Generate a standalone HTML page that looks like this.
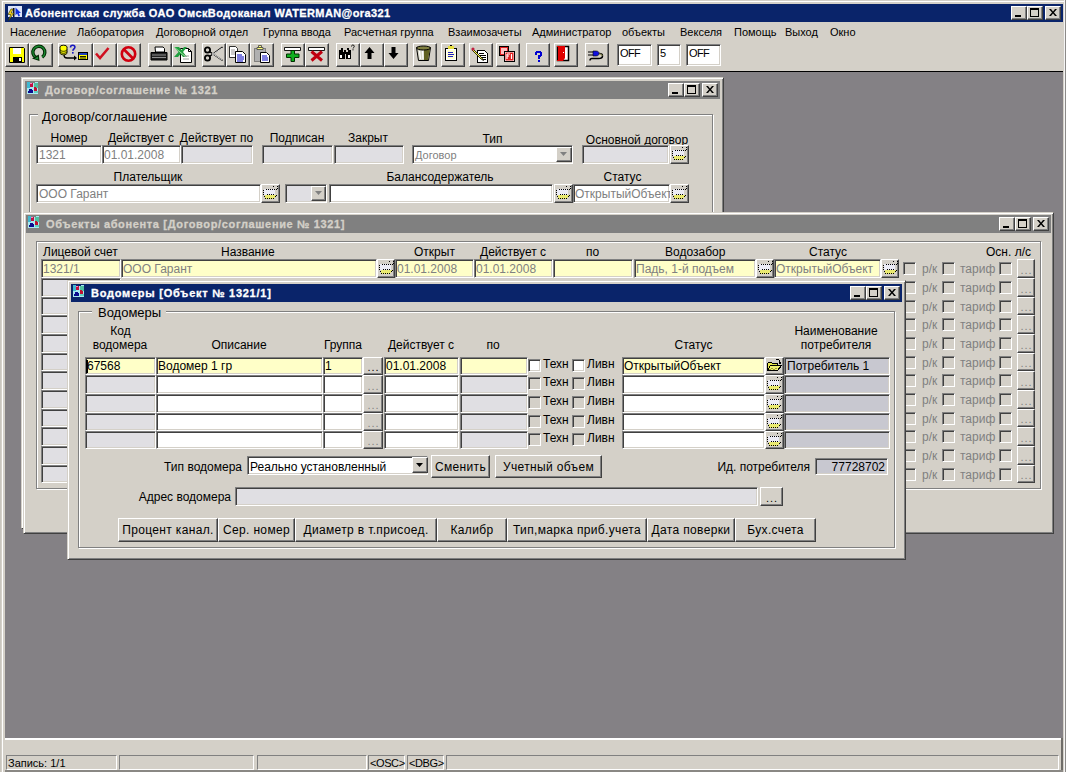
<!DOCTYPE html>
<html><head><meta charset="utf-8"><style>
html,body{margin:0;padding:0;width:1066px;height:772px;overflow:hidden;background:#D4D0C8}
body{position:relative;font-family:"Liberation Sans",sans-serif;}
div{position:absolute;box-sizing:border-box}
.t{white-space:pre}
</style></head><body>
<div style="left:0;top:0;width:1066px;height:772px;background:#D4D0C8"></div>
<div style="left:2px;top:1px;width:1064px;height:1px;background:#fff;"></div>
<div style="left:2px;top:1px;width:1px;height:771px;background:#fff;"></div>
<div style="left:0px;top:0px;width:1px;height:772px;background:#C8C5BE;"></div>
<div style="left:5px;top:4px;width:1058px;height:18px;background:#0A246A;"></div>
<svg style="position:absolute;left:7px;top:5px" width="16" height="16" viewBox="0 0 16 16">
<rect x="1" y="1" width="14" height="11" fill="#dce4f8"/><rect x="6" y="3" width="1.5" height="9" fill="#101020"/>
<path d="M8.5 2.5l5.5 5.5h-2.2l1.2 3-1.6.6-1.2-3-1.7 1.6z" fill="#1030e0"/>
<path d="M4 4L1 9.5h2.8L1.5 15.5l5.5-7.5H4.3l1.8-4z" fill="#f0d020" stroke="#303000" stroke-width="0.6"/></svg>
<div class="t" style="left:25px;top:6px;font-size:11px;line-height:15px;color:#fff;font-weight:bold;letter-spacing:0.4px;-webkit-text-stroke:0.3px #fff;">Абонентская служба ОАО ОмскВодоканал WATERMAN@ora321</div>
<div style="left:1011px;top:6px;width:16px;height:14px;background:#D4D0C8;border:1px solid;border-color:#fff #404040 #404040 #fff;box-shadow:inset -1px -1px #808080;"></div>
<div style="left:1027px;top:6px;width:16px;height:14px;background:#D4D0C8;border:1px solid;border-color:#fff #404040 #404040 #fff;box-shadow:inset -1px -1px #808080;"></div>
<div style="left:1045px;top:6px;width:16px;height:14px;background:#D4D0C8;border:1px solid;border-color:#fff #404040 #404040 #fff;box-shadow:inset -1px -1px #808080;"></div>
<div style="left:1015px;top:15px;width:6px;height:2px;background:#000;"></div>
<div style="left:1030px;top:8px;width:9px;height:9px;border:1px solid #000;border-top-width:2px;"></div>
<svg style="position:absolute;left:1049px;top:9px" width="8" height="7" viewBox="0 0 8 7"><path d="M0 0h2l2 2.5L6 0h2L5 3.5 8 7H6L4 4.5 2 7H0l3-3.5z" fill="#000"/></svg>
<div class="t" style="left:10px;top:25px;font-size:11px;line-height:15px;color:#000;">Население</div>
<div class="t" style="left:77px;top:25px;font-size:11px;line-height:15px;color:#000;">Лаборатория</div>
<div class="t" style="left:156px;top:25px;font-size:11px;line-height:15px;color:#000;">Договорной отдел</div>
<div class="t" style="left:263px;top:25px;font-size:11px;line-height:15px;color:#000;">Группа ввода</div>
<div class="t" style="left:344px;top:25px;font-size:11px;line-height:15px;color:#000;">Расчетная группа</div>
<div class="t" style="left:448px;top:25px;font-size:11px;line-height:15px;color:#000;">Взаимозачеты</div>
<div class="t" style="left:532px;top:25px;font-size:11px;line-height:15px;color:#000;">Администратор</div>
<div class="t" style="left:622px;top:25px;font-size:11px;line-height:15px;color:#000;">объекты</div>
<div class="t" style="left:680px;top:25px;font-size:11px;line-height:15px;color:#000;">Векселя</div>
<div class="t" style="left:734px;top:25px;font-size:11px;line-height:15px;color:#000;">Помощь</div>
<div class="t" style="left:785px;top:25px;font-size:11px;line-height:15px;color:#000;">Выход</div>
<div class="t" style="left:830px;top:25px;font-size:11px;line-height:15px;color:#000;">Окно</div>
<div style="left:5px;top:43px;width:24px;height:24px;background:#D4D0C8;border:1px solid;border-color:#fff #404040 #404040 #fff;box-shadow:inset -1px -1px #808080;"></div>
<svg style="position:absolute;left:5px;top:43px" width="24" height="24" viewBox="0 0 24 24"><path d="M4.5 4.5h14l1 1v14h-15z" fill="#ff0" stroke="#000"/>
<rect x="8" y="5" width="8" height="6" fill="#fff"/><rect x="8" y="14" width="9" height="6" fill="#000"/><rect x="14" y="15" width="2" height="3" fill="#fff"/></svg>
<div style="left:29px;top:43px;width:24px;height:24px;background:#D4D0C8;border:1px solid;border-color:#fff #404040 #404040 #fff;box-shadow:inset -1px -1px #808080;"></div>
<svg style="position:absolute;left:29px;top:43px" width="24" height="24" viewBox="0 0 24 24"><path d="M13.2 14.2 A6 6 0 1 0 7.2 14.6" fill="none" stroke="#002800" stroke-width="3.4"/>
<path d="M13.2 14.2 A6 6 0 1 0 7.2 14.6" fill="none" stroke="#1a8a30" stroke-width="1.3"/>
<path d="M3 15.5 L10.5 18 L9.8 11.5z" fill="#002800"/><path d="M5.5 15.5 L9.3 16.6 L9 13.5z" fill="#1a8a30"/></svg>
<div style="left:58px;top:43px;width:35px;height:24px;background:#D4D0C8;border:1px solid;border-color:#fff #404040 #404040 #fff;box-shadow:inset -1px -1px #808080;"></div>
<svg style="position:absolute;left:58px;top:43px" width="35" height="24" viewBox="0 0 35 24"><ellipse cx="5.5" cy="4" rx="3.5" ry="1.8" fill="#ff0" stroke="#000" stroke-width="0.9"/>
<path d="M2 4v6c0 1 1.6 1.8 3.5 1.8S9 11 9 10V4" fill="#ff0" stroke="#000" stroke-width="0.9"/>
<path d="M2 6.5c0 1 1.6 1.8 3.5 1.8S9 7.5 9 6.5M2 8.5c0 1 1.6 1.8 3.5 1.8S9 9.5 9 8.5" fill="none" stroke="#000" stroke-width="0.8"/>
<path d="M12.5 4.5c0-1.5 1-2.2 2.2-2.2s2.2.8 2.2 2c0 1.5-2 1.8-2 3.5" fill="none" stroke="#1818c0" stroke-width="1.6"/><rect x="14" y="9" width="1.6" height="1.6" fill="#1818c0"/>
<path d="M6 12c0 2 1 3 3 3h8" fill="none" stroke="#000" stroke-width="1.3"/><path d="M16 12.5l3 2.5-3 2.5z" fill="#000"/>
<rect x="20.5" y="9.5" width="9" height="7" fill="#ff0" stroke="#000"/><rect x="21" y="10" width="8" height="2" fill="#2040c0"/>
<path d="M22 13.5h6M22 15h6" stroke="#000" stroke-width="0.9"/></svg>
<div style="left:93px;top:43px;width:24px;height:24px;background:#D4D0C8;border:1px solid;border-color:#fff #404040 #404040 #fff;box-shadow:inset -1px -1px #808080;"></div>
<svg style="position:absolute;left:93px;top:43px" width="24" height="24" viewBox="0 0 24 24"><path d="M3 10.5 L7 15 L15.5 5" fill="none" stroke="#d01020" stroke-width="2.6"/></svg>
<div style="left:117px;top:43px;width:24px;height:24px;background:#D4D0C8;border:1px solid;border-color:#fff #404040 #404040 #fff;box-shadow:inset -1px -1px #808080;"></div>
<svg style="position:absolute;left:117px;top:43px" width="24" height="24" viewBox="0 0 24 24"><circle cx="11.5" cy="11" r="6.7" fill="none" stroke="#d00010" stroke-width="2.6"/><path d="M7 6.5 L16 15.5" stroke="#d00010" stroke-width="2.6"/></svg>
<div style="left:148px;top:43px;width:24px;height:24px;background:#D4D0C8;border:1px solid;border-color:#fff #404040 #404040 #fff;box-shadow:inset -1px -1px #808080;"></div>
<svg style="position:absolute;left:148px;top:43px" width="24" height="24" viewBox="0 0 24 24"><path d="M7 4h8l1.5 1.5V9h-9z" fill="#fff" stroke="#000"/>
<path d="M3 9.5h16v7.5H3z" fill="#202020" stroke="#000"/><path d="M4 12h14M4 14.5h14" stroke="#909090" stroke-width="1"/></svg>
<div style="left:172px;top:43px;width:24px;height:24px;background:#D4D0C8;border:1px solid;border-color:#fff #404040 #404040 #fff;box-shadow:inset -1px -1px #808080;"></div>
<svg style="position:absolute;left:172px;top:43px" width="24" height="24" viewBox="0 0 24 24"><path d="M8.5 5.5h8l3 3v11h-11z" fill="#fff" stroke="#000"/><path d="M16.5 5.5v3h3" fill="none" stroke="#000"/>
<path d="M2 4h5l2.5 3 2.5-3h3l-4 5 4 5h-4l-2.5-3-2.5 3H2l4.5-5z" fill="#20a040"/><path d="M2 4 L14 14" stroke="#a0e0a0" stroke-width="1"/>
<path d="M11 16h6M12 13h5" stroke="#a0a0a0"/></svg>
<div style="left:202px;top:43px;width:24px;height:24px;background:#D4D0C8;border:1px solid;border-color:#fff #404040 #404040 #fff;box-shadow:inset -1px -1px #808080;"></div>
<svg style="position:absolute;left:202px;top:43px" width="24" height="24" viewBox="0 0 24 24"><circle cx="5.5" cy="7" r="2.6" fill="none" stroke="#000" stroke-width="1.8"/><circle cx="5.5" cy="15" r="2.6" fill="none" stroke="#000" stroke-width="1.8"/>
<path d="M7.5 8.5 L20.5 17.5 M7.5 13.5 L20.5 4" stroke="#000" stroke-width="1.4"/><path d="M10 10 L20 17 M10 12 L20 5" stroke="#fff" stroke-width="0.8"/></svg>
<div style="left:226px;top:43px;width:24px;height:24px;background:#D4D0C8;border:1px solid;border-color:#fff #404040 #404040 #fff;box-shadow:inset -1px -1px #808080;"></div>
<svg style="position:absolute;left:226px;top:43px" width="24" height="24" viewBox="0 0 24 24"><path d="M3.5 3.5h6l2 2v9h-8z" fill="#fff" stroke="#000" stroke-width="0.8"/><path d="M5 7h4M5 9h5M5 11h5" stroke="#808080" stroke-width="0.8"/>
<path d="M9.5 8.5h7l3 3v8h-10z" fill="#fff" stroke="#000"/><path d="M11 12h5M11 14h7M11 16h7M11 18h6" stroke="#0000c0" stroke-width="1"/></svg>
<div style="left:250px;top:43px;width:24px;height:24px;background:#D4D0C8;border:1px solid;border-color:#fff #404040 #404040 #fff;box-shadow:inset -1px -1px #808080;"></div>
<svg style="position:absolute;left:250px;top:43px" width="24" height="24" viewBox="0 0 24 24"><path d="M4.5 5.5h11v13h-11z" fill="#b0b0b0" stroke="#404040" stroke-dasharray="1 1"/><path d="M7 4.5h6v2H7z" fill="#ffff80" stroke="#404040" stroke-width="0.8"/><path d="M8.5 2.5h3v2h-3z" fill="#ffff80" stroke="#404040" stroke-width="0.8"/>
<path d="M10.5 9.5h6l3 3v7h-9z" fill="#fff" stroke="#000"/><path d="M12 13h5M12 15h6M12 17h6" stroke="#0000c0" stroke-width="1"/></svg>
<div style="left:281px;top:43px;width:24px;height:24px;background:#D4D0C8;border:1px solid;border-color:#fff #404040 #404040 #fff;box-shadow:inset -1px -1px #808080;"></div>
<svg style="position:absolute;left:281px;top:43px" width="24" height="24" viewBox="0 0 24 24"><path d="M3.5 4.5h16v3h-16z" fill="#fff" stroke="#000" stroke-width="0.9"/>
<path d="M10 7.5h3.5v3.5H18v3.5h-4.5v4H10v-4H5.5V11H10z" fill="#10b020" stroke="#003000" stroke-width="1"/></svg>
<div style="left:305px;top:43px;width:24px;height:24px;background:#D4D0C8;border:1px solid;border-color:#fff #404040 #404040 #fff;box-shadow:inset -1px -1px #808080;"></div>
<svg style="position:absolute;left:305px;top:43px" width="24" height="24" viewBox="0 0 24 24"><path d="M3.5 4.5h16v3h-16z" fill="#fff" stroke="#000" stroke-width="0.9"/>
<path d="M6.5 8.5 L17 17.5 M17 8.5 L6.5 17.5" stroke="#c00010" stroke-width="3"/></svg>
<div style="left:336px;top:43px;width:24px;height:24px;background:#D4D0C8;border:1px solid;border-color:#fff #404040 #404040 #fff;box-shadow:inset -1px -1px #808080;"></div>
<svg style="position:absolute;left:336px;top:43px" width="24" height="24" viewBox="0 0 24 24"><path d="M3 7h4v2h1v-2h2v2h2V7h3v9h-5v-5H9v5H3z" fill="#000"/><rect x="4" y="12" width="2" height="3" fill="#fff"/><rect x="12" y="12" width="2" height="3" fill="#fff"/><rect x="5" y="5" width="2" height="2" fill="#000"/><rect x="11" y="5" width="2" height="2" fill="#000"/>
<path d="M15.5 3.5c0-1 .6-1.5 1.4-1.5s1.4.5 1.4 1.3c0 1-1.2 1.2-1.2 2.2" fill="none" stroke="#000" stroke-width="0.9"/><rect x="16.5" y="6.3" width="1" height="1" fill="#000"/></svg>
<div style="left:360px;top:43px;width:24px;height:24px;background:#D4D0C8;border:1px solid;border-color:#fff #404040 #404040 #fff;box-shadow:inset -1px -1px #808080;"></div>
<svg style="position:absolute;left:360px;top:43px" width="24" height="24" viewBox="0 0 24 24"><path d="M9.5 4 L14.5 10 H11.5 V16 H7.5 V10 H4.5z" fill="#000"/></svg>
<div style="left:384px;top:43px;width:24px;height:24px;background:#D4D0C8;border:1px solid;border-color:#fff #404040 #404040 #fff;box-shadow:inset -1px -1px #808080;"></div>
<svg style="position:absolute;left:384px;top:43px" width="24" height="24" viewBox="0 0 24 24"><path d="M9.5 16 L14.5 10 H11.5 V4 H7.5 V10 H4.5z" fill="#000"/></svg>
<div style="left:413px;top:43px;width:24px;height:24px;background:#D4D0C8;border:1px solid;border-color:#fff #404040 #404040 #fff;box-shadow:inset -1px -1px #808080;"></div>
<svg style="position:absolute;left:413px;top:43px" width="24" height="24" viewBox="0 0 24 24"><path d="M3.5 4.5h14l-2 13h-10z" fill="#d8d8c8" stroke="#000"/><path d="M11 6h6l-2 11h-4z" fill="#606020"/><ellipse cx="10.5" cy="5" rx="7" ry="2" fill="#808040" stroke="#000"/><path d="M6.5 8 L7.5 16 M9.5 8 L10 16" stroke="#fff" stroke-width="1.2"/></svg>
<div style="left:441px;top:43px;width:24px;height:24px;background:#D4D0C8;border:1px solid;border-color:#fff #404040 #404040 #fff;box-shadow:inset -1px -1px #808080;"></div>
<svg style="position:absolute;left:441px;top:43px" width="24" height="24" viewBox="0 0 24 24"><g shape-rendering="crispEdges"><rect x="4" y="5" width="12" height="13" fill="#000"/><rect x="5" y="6" width="10" height="11" fill="#fff"/><rect x="6" y="7" width="8" height="9" fill="#ffffd0"/><rect x="7" y="3" width="6" height="3" fill="#e8e040"/><rect x="9" y="2" width="2" height="1" fill="#000"/><rect x="7" y="9" width="5" height="1" fill="#2020c0"/><rect x="7" y="11" width="6" height="1" fill="#2020c0"/><rect x="7" y="13" width="5" height="1" fill="#2020c0"/></g></svg>
<div style="left:469px;top:43px;width:24px;height:24px;background:#D4D0C8;border:1px solid;border-color:#fff #404040 #404040 #fff;box-shadow:inset -1px -1px #808080;"></div>
<svg style="position:absolute;left:469px;top:43px" width="24" height="24" viewBox="0 0 24 24"><g shape-rendering="crispEdges"><path d="M8 7h7l3 3v9H8z" fill="#fff" stroke="#000" stroke-width="1"/><rect x="10" y="10" width="5" height="1" fill="#000"/><rect x="11" y="12" width="6" height="1" fill="#000"/><rect x="12" y="14" width="5" height="1" fill="#000"/><rect x="13" y="16" width="4" height="1" fill="#000"/></g><path d="M4 6 L13 15 L14.5 17.5 L12 16 L3 7z" fill="#ffff40" stroke="#000" stroke-width="0.8"/><circle cx="4" cy="6" r="1.6" fill="#c02040"/></svg>
<div style="left:496px;top:43px;width:24px;height:24px;background:#D4D0C8;border:1px solid;border-color:#fff #404040 #404040 #fff;box-shadow:inset -1px -1px #808080;"></div>
<svg style="position:absolute;left:496px;top:43px" width="24" height="24" viewBox="0 0 24 24"><rect x="3.5" y="3.5" width="9" height="9" fill="#e02020" stroke="#000"/><rect x="5" y="5" width="6" height="6" fill="#ffc0c0"/>
<rect x="8.5" y="8.5" width="10" height="10" fill="#fff" stroke="#000"/><rect x="9.5" y="9.5" width="8" height="8" fill="#e02020"/><path d="M11 11h3M11 11v5M11 13h2M15.5 11v5" stroke="#fff" stroke-width="1.2"/></svg>
<div style="left:526px;top:43px;width:24px;height:24px;background:#D4D0C8;border:1px solid;border-color:#fff #404040 #404040 #fff;box-shadow:inset -1px -1px #808080;"></div>
<svg style="position:absolute;left:526px;top:43px" width="24" height="24" viewBox="0 0 24 24"><g shape-rendering="crispEdges" fill="#0000d0"><rect x="10" y="8" width="5" height="2"/><rect x="9" y="9" width="2" height="3"/><rect x="14" y="9" width="2" height="4"/><rect x="12" y="12" width="3" height="2"/><rect x="12" y="13" width="2" height="3"/><rect x="12" y="17" width="2" height="2"/></g></svg>
<div style="left:554px;top:43px;width:24px;height:24px;background:#D4D0C8;border:1px solid;border-color:#fff #404040 #404040 #fff;box-shadow:inset -1px -1px #808080;"></div>
<svg style="position:absolute;left:554px;top:43px" width="24" height="24" viewBox="0 0 24 24"><rect x="3.5" y="3.5" width="11" height="14" fill="#fff" stroke="#000" stroke-width="1.5"/><path d="M3 3h8v12l-2 3H3z" fill="#e00000"/><rect x="3" y="4" width="1" height="13" fill="#000"/><rect x="9" y="9" width="1" height="1" fill="#fff"/></svg>
<div style="left:585px;top:43px;width:24px;height:24px;background:#D4D0C8;border:1px solid;border-color:#fff #404040 #404040 #fff;box-shadow:inset -1px -1px #808080;"></div>
<svg style="position:absolute;left:585px;top:43px" width="24" height="24" viewBox="0 0 24 24"><path d="M8 8h3c2 0 3 1 3 2.5S13 13 11 13H8z" fill="#1010e0" stroke="#000" stroke-width="0.6"/><path d="M3 9h5M3 12h5" stroke="#000" stroke-width="1.2"/>
<path d="M14 10.5c3 0 3.5 1 3.5 2.5s-1 2.5-4 2.5H7c-1 0-2 .8-2 2" fill="none" stroke="#000" stroke-width="1.5"/><path d="M14 11c2.5 0 3 1 3 2" fill="none" stroke="#e0e080" stroke-width="0.8"/></svg>
<div style="left:617px;top:44px;width:35px;height:22px;background:#fff;border:1px solid;border-color:#808080 #fff #fff #808080;box-shadow:inset 1px 1px #404040,inset -1px -1px #D4D0C8;"></div>
<div class="t" style="left:620px;top:46px;font-size:11px;line-height:15px;color:#000;letter-spacing:-0.6px;">OFF</div>
<div style="left:657px;top:44px;width:24px;height:22px;background:#fff;border:1px solid;border-color:#808080 #fff #fff #808080;box-shadow:inset 1px 1px #404040,inset -1px -1px #D4D0C8;"></div>
<div class="t" style="left:660px;top:46px;font-size:11px;line-height:15px;color:#000;letter-spacing:-0.6px;">5</div>
<div style="left:686px;top:44px;width:35px;height:22px;background:#fff;border:1px solid;border-color:#808080 #fff #fff #808080;box-shadow:inset 1px 1px #404040,inset -1px -1px #D4D0C8;"></div>
<div class="t" style="left:689px;top:46px;font-size:11px;line-height:15px;color:#000;letter-spacing:-0.6px;">OFF</div>
<div style="left:5px;top:71px;width:1058px;height:1px;background:#000;"></div>
<div style="left:5px;top:72px;width:1058px;height:666px;background:#848185;"></div>
<div style="left:5px;top:738px;width:1058px;height:2px;background:#fff;"></div>
<div style="left:6px;top:755px;width:111px;height:15px;border:1px solid;border-color:#808080 #fff #fff #808080;"></div>
<div class="t" style="left:8px;top:756px;font-size:11px;line-height:15px;color:#000;">Запись: 1/1</div>
<div style="left:119px;top:755px;width:135px;height:15px;border:1px solid;border-color:#808080 #fff #fff #808080;"></div>
<div style="left:257px;top:755px;width:110px;height:15px;border:1px solid;border-color:#808080 #fff #fff #808080;"></div>
<div style="left:368px;top:755px;width:37px;height:15px;border:1px solid;border-color:#808080 #fff #fff #808080;"></div>
<div class="t" style="left:370px;top:756px;font-size:11px;line-height:15px;color:#000;letter-spacing:-0.4px;">&lt;OSC&gt;</div>
<div style="left:407px;top:755px;width:37px;height:15px;border:1px solid;border-color:#808080 #fff #fff #808080;"></div>
<div class="t" style="left:409px;top:756px;font-size:11px;line-height:15px;color:#000;letter-spacing:-0.4px;">&lt;DBG&gt;</div>
<div style="left:446px;top:755px;width:613px;height:15px;border:1px solid;border-color:#808080 #fff #fff #808080;"></div>
<div style="left:1061px;top:738px;width:2px;height:34px;background:#6e6c68;"></div>
<div style="left:5px;top:770px;width:1058px;height:2px;background:#8a8884;"></div>
<div style="left:1064px;top:0px;width:1px;height:772px;background:#f4f4f4;"></div>
<div style="left:1065px;top:0px;width:1px;height:772px;background:#8c8a88;"></div>
<div style="left:21px;top:77px;width:703px;height:452px;background:#D4D0C8;border:1px solid;border-color:#D4D0C8 #404040 #404040 #D4D0C8;box-shadow:inset 1px 1px #fff,inset -1px -1px #808080;"></div>
<div style="left:25px;top:81px;width:695px;height:18px;background:#808080;"></div>
<svg style="position:absolute;left:27px;top:82px" width="12" height="12" viewBox="0 0 12 12" shape-rendering="crispEdges">
<path d="M0 1h8v-1h3v12H0z" fill="#a8e8f0"/><rect x="0" y="0" width="3" height="6" fill="#40b8d0"/>
<rect x="7" y="1" width="4" height="5" fill="#50c0a0"/>
<rect x="3" y="1" width="3" height="4" fill="#c01040"/><rect x="3" y="1" width="2" height="1" fill="#ff80c0"/>
<path d="M7 5h2v1h1v3H7z" fill="#c01030"/>
<path d="M2 7h3v1h1v3H1V9h1z" fill="#0a0a90"/>
<rect x="7" y="9" width="4" height="2" fill="#60d0c0"/></svg>
<div class="t" style="left:45px;top:83px;font-size:11px;line-height:15px;color:#D4D0C8;font-weight:bold;letter-spacing:0.65px;-webkit-text-stroke:0.3px #D4D0C8;">Договор/соглашение № 1321</div>
<div style="left:668px;top:83px;width:16px;height:14px;background:#D4D0C8;border:1px solid;border-color:#fff #404040 #404040 #fff;box-shadow:inset -1px -1px #808080;"></div>
<div style="left:684px;top:83px;width:16px;height:14px;background:#D4D0C8;border:1px solid;border-color:#fff #404040 #404040 #fff;box-shadow:inset -1px -1px #808080;"></div>
<div style="left:702px;top:83px;width:16px;height:14px;background:#D4D0C8;border:1px solid;border-color:#fff #404040 #404040 #fff;box-shadow:inset -1px -1px #808080;"></div>
<div style="left:672px;top:92px;width:6px;height:2px;background:#000;"></div>
<div style="left:687px;top:85px;width:9px;height:9px;border:1px solid #000;border-top-width:2px;"></div>
<svg style="position:absolute;left:706px;top:86px" width="8" height="7" viewBox="0 0 8 7"><path d="M0 0h2l2 2.5L6 0h2L5 3.5 8 7H6L4 4.5 2 7H0l3-3.5z" fill="#000"/></svg>
<div style="left:30px;top:115px;width:684px;height:120px;border:1px solid #fff;"></div>
<div style="left:29px;top:114px;width:684px;height:120px;border:1px solid #808080;"></div>
<div style="left:38px;top:108px;width:132px;height:14px;background:#D4D0C8;"></div>
<div class="t" style="left:42px;top:108px;font-size:13px;line-height:17px;color:#000;">Договор/соглашение</div>
<div class="t" style="left:-131px;top:130px;width:400px;text-align:center;font-size:12px;line-height:16px;color:#000;">Номер</div>
<div class="t" style="left:-59px;top:130px;width:400px;text-align:center;font-size:12px;line-height:16px;color:#000;">Действует с</div>
<div class="t" style="left:16.5px;top:130px;width:400px;text-align:center;font-size:12px;line-height:16px;color:#000;">Действует по</div>
<div class="t" style="left:97px;top:130px;width:400px;text-align:center;font-size:12px;line-height:16px;color:#000;">Подписан</div>
<div class="t" style="left:168px;top:130px;width:400px;text-align:center;font-size:12px;line-height:16px;color:#000;">Закрыт</div>
<div class="t" style="left:292.5px;top:131px;width:400px;text-align:center;font-size:12px;line-height:16px;color:#000;">Тип</div>
<div class="t" style="left:437px;top:132px;width:400px;text-align:center;font-size:12px;line-height:16px;color:#000;">Основной договор</div>
<div style="left:36px;top:145px;width:66px;height:19px;background:#fff;border:1px solid;border-color:#808080 #fff #fff #808080;box-shadow:inset 1px 1px #404040,inset -1px -1px #D4D0C8;"></div>
<div class="t" style="left:39px;top:147px;font-size:12px;line-height:16px;color:#808080;">1321</div>
<div style="left:102px;top:145px;width:79px;height:19px;background:#fff;border:1px solid;border-color:#808080 #fff #fff #808080;box-shadow:inset 1px 1px #404040,inset -1px -1px #D4D0C8;"></div>
<div class="t" style="left:104px;top:147px;font-size:12px;line-height:16px;color:#808080;">01.01.2008</div>
<div style="left:181px;top:145px;width:72px;height:19px;background:#E0DFE3;border:1px solid;border-color:#808080 #fff #fff #808080;box-shadow:inset 1px 1px #404040,inset -1px -1px #D4D0C8;"></div>
<div style="left:262px;top:145px;width:71px;height:19px;background:#E0DFE3;border:1px solid;border-color:#808080 #fff #fff #808080;box-shadow:inset 1px 1px #404040,inset -1px -1px #D4D0C8;"></div>
<div style="left:334px;top:145px;width:70px;height:19px;background:#E0DFE3;border:1px solid;border-color:#808080 #fff #fff #808080;box-shadow:inset 1px 1px #404040,inset -1px -1px #D4D0C8;"></div>
<div style="left:412px;top:145px;width:161px;height:19px;background:#fff;border:1px solid;border-color:#808080 #fff #fff #808080;box-shadow:inset 1px 1px #404040,inset -1px -1px #D4D0C8;"></div>
<div class="t" style="left:415px;top:148px;font-size:11px;line-height:15px;color:#808080;">Договор</div>
<div style="left:556px;top:147px;width:16px;height:15px;background:#D4D0C8;border:1px solid;border-color:#fff #404040 #404040 #fff;box-shadow:inset -1px -1px #808080;"></div>
<svg style="position:absolute;left:560px;top:152px" width="7" height="4" viewBox="0 0 7 4"><path d="M0 0h7L3.5 4z" fill="#808080"/></svg>
<div style="left:582px;top:145px;width:87px;height:19px;background:#E0DFE3;border:1px solid;border-color:#808080 #fff #fff #808080;box-shadow:inset 1px 1px #404040,inset -1px -1px #D4D0C8;"></div>
<div style="left:670px;top:145px;width:19px;height:19px;background:#D4D0C8;border:1px solid;border-color:#fff #404040 #404040 #fff;box-shadow:inset -1px -1px #808080;"></div>
<svg style="position:absolute;left:670px;top:145px" width="19" height="19" viewBox="0 0 19 19" shape-rendering="crispEdges"><rect x="3" y="5" width="11" height="6" fill="#ececf6"/><path d="M5 10.5h9.5l1.5 1-3 3H4.5l-1.5-2z" fill="#eaea70"/><rect x="12" y="2" width="1" height="1" fill="#000"/><rect x="16" y="2" width="1" height="1" fill="#000"/><rect x="16" y="4" width="1" height="1" fill="#000"/><rect x="15" y="5" width="1" height="1" fill="#000"/><rect x="13" y="5" width="1" height="1" fill="#000"/><rect x="5" y="5" width="1" height="1" fill="#000"/><rect x="7" y="5" width="1" height="1" fill="#000"/><rect x="9" y="5" width="1" height="1" fill="#000"/><rect x="11" y="5" width="1" height="1" fill="#000"/><rect x="2" y="6" width="1" height="1" fill="#000"/><rect x="2" y="8" width="1" height="1" fill="#000"/><rect x="2" y="10" width="1" height="1" fill="#000"/><rect x="3" y="12" width="1" height="1" fill="#000"/><rect x="4" y="14" width="1" height="1" fill="#000"/><rect x="6" y="14" width="1" height="1" fill="#000"/><rect x="8" y="14" width="1" height="1" fill="#000"/><rect x="10" y="14" width="1" height="1" fill="#000"/><rect x="12" y="14" width="1" height="1" fill="#000"/><rect x="14" y="12" width="1" height="1" fill="#000"/><rect x="15" y="11" width="1" height="1" fill="#000"/><rect x="6" y="10" width="1" height="1" fill="#000"/><rect x="8" y="10" width="1" height="1" fill="#000"/><rect x="10" y="10" width="1" height="1" fill="#000"/><rect x="12" y="10" width="1" height="1" fill="#000"/></svg>
<div class="t" style="left:-52px;top:169px;width:400px;text-align:center;font-size:12px;line-height:16px;color:#000;">Плательщик</div>
<div class="t" style="left:240px;top:169px;width:400px;text-align:center;font-size:12px;line-height:16px;color:#000;">Балансодержатель</div>
<div class="t" style="left:422.5px;top:169px;width:400px;text-align:center;font-size:12px;line-height:16px;color:#000;">Статус</div>
<div style="left:36px;top:184px;width:225px;height:19px;background:#fff;border:1px solid;border-color:#808080 #fff #fff #808080;box-shadow:inset 1px 1px #404040,inset -1px -1px #D4D0C8;"></div>
<div class="t" style="left:39px;top:186px;font-size:12px;line-height:16px;color:#808080;">ООО Гарант</div>
<div style="left:261px;top:184px;width:19px;height:19px;background:#D4D0C8;border:1px solid;border-color:#fff #404040 #404040 #fff;box-shadow:inset -1px -1px #808080;"></div>
<svg style="position:absolute;left:261px;top:184px" width="19" height="19" viewBox="0 0 19 19" shape-rendering="crispEdges"><rect x="3" y="5" width="11" height="6" fill="#ececf6"/><path d="M5 10.5h9.5l1.5 1-3 3H4.5l-1.5-2z" fill="#eaea70"/><rect x="12" y="2" width="1" height="1" fill="#000"/><rect x="16" y="2" width="1" height="1" fill="#000"/><rect x="16" y="4" width="1" height="1" fill="#000"/><rect x="15" y="5" width="1" height="1" fill="#000"/><rect x="13" y="5" width="1" height="1" fill="#000"/><rect x="5" y="5" width="1" height="1" fill="#000"/><rect x="7" y="5" width="1" height="1" fill="#000"/><rect x="9" y="5" width="1" height="1" fill="#000"/><rect x="11" y="5" width="1" height="1" fill="#000"/><rect x="2" y="6" width="1" height="1" fill="#000"/><rect x="2" y="8" width="1" height="1" fill="#000"/><rect x="2" y="10" width="1" height="1" fill="#000"/><rect x="3" y="12" width="1" height="1" fill="#000"/><rect x="4" y="14" width="1" height="1" fill="#000"/><rect x="6" y="14" width="1" height="1" fill="#000"/><rect x="8" y="14" width="1" height="1" fill="#000"/><rect x="10" y="14" width="1" height="1" fill="#000"/><rect x="12" y="14" width="1" height="1" fill="#000"/><rect x="14" y="12" width="1" height="1" fill="#000"/><rect x="15" y="11" width="1" height="1" fill="#000"/><rect x="6" y="10" width="1" height="1" fill="#000"/><rect x="8" y="10" width="1" height="1" fill="#000"/><rect x="10" y="10" width="1" height="1" fill="#000"/><rect x="12" y="10" width="1" height="1" fill="#000"/></svg>
<div style="left:285px;top:184px;width:42px;height:19px;background:#E0DFE3;border:1px solid;border-color:#808080 #fff #fff #808080;box-shadow:inset 1px 1px #404040,inset -1px -1px #D4D0C8;"></div>
<div style="left:311px;top:186px;width:15px;height:15px;background:#D4D0C8;border:1px solid;border-color:#fff #404040 #404040 #fff;box-shadow:inset -1px -1px #808080;"></div>
<svg style="position:absolute;left:315px;top:191px" width="7" height="4" viewBox="0 0 7 4"><path d="M0 0h7L3.5 4z" fill="#808080"/></svg>
<div style="left:329px;top:184px;width:224px;height:19px;background:#fff;border:1px solid;border-color:#808080 #fff #fff #808080;box-shadow:inset 1px 1px #404040,inset -1px -1px #D4D0C8;"></div>
<div style="left:554px;top:184px;width:19px;height:19px;background:#D4D0C8;border:1px solid;border-color:#fff #404040 #404040 #fff;box-shadow:inset -1px -1px #808080;"></div>
<svg style="position:absolute;left:554px;top:184px" width="19" height="19" viewBox="0 0 19 19" shape-rendering="crispEdges"><rect x="3" y="5" width="11" height="6" fill="#ececf6"/><path d="M5 10.5h9.5l1.5 1-3 3H4.5l-1.5-2z" fill="#eaea70"/><rect x="12" y="2" width="1" height="1" fill="#000"/><rect x="16" y="2" width="1" height="1" fill="#000"/><rect x="16" y="4" width="1" height="1" fill="#000"/><rect x="15" y="5" width="1" height="1" fill="#000"/><rect x="13" y="5" width="1" height="1" fill="#000"/><rect x="5" y="5" width="1" height="1" fill="#000"/><rect x="7" y="5" width="1" height="1" fill="#000"/><rect x="9" y="5" width="1" height="1" fill="#000"/><rect x="11" y="5" width="1" height="1" fill="#000"/><rect x="2" y="6" width="1" height="1" fill="#000"/><rect x="2" y="8" width="1" height="1" fill="#000"/><rect x="2" y="10" width="1" height="1" fill="#000"/><rect x="3" y="12" width="1" height="1" fill="#000"/><rect x="4" y="14" width="1" height="1" fill="#000"/><rect x="6" y="14" width="1" height="1" fill="#000"/><rect x="8" y="14" width="1" height="1" fill="#000"/><rect x="10" y="14" width="1" height="1" fill="#000"/><rect x="12" y="14" width="1" height="1" fill="#000"/><rect x="14" y="12" width="1" height="1" fill="#000"/><rect x="15" y="11" width="1" height="1" fill="#000"/><rect x="6" y="10" width="1" height="1" fill="#000"/><rect x="8" y="10" width="1" height="1" fill="#000"/><rect x="10" y="10" width="1" height="1" fill="#000"/><rect x="12" y="10" width="1" height="1" fill="#000"/></svg>
<div style="left:573px;top:184px;width:97px;height:19px;background:#fff;border:1px solid;border-color:#808080 #fff #fff #808080;box-shadow:inset 1px 1px #404040,inset -1px -1px #D4D0C8;overflow:hidden;"></div>
<div class="t" style="left:575px;top:186px;font-size:12px;line-height:16px;color:#808080;">ОткрытыйОбъект</div>
<div style="left:670px;top:184px;width:19px;height:19px;background:#D4D0C8;border:1px solid;border-color:#fff #404040 #404040 #fff;box-shadow:inset -1px -1px #808080;"></div>
<svg style="position:absolute;left:670px;top:184px" width="19" height="19" viewBox="0 0 19 19" shape-rendering="crispEdges"><rect x="3" y="5" width="11" height="6" fill="#ececf6"/><path d="M5 10.5h9.5l1.5 1-3 3H4.5l-1.5-2z" fill="#eaea70"/><rect x="12" y="2" width="1" height="1" fill="#000"/><rect x="16" y="2" width="1" height="1" fill="#000"/><rect x="16" y="4" width="1" height="1" fill="#000"/><rect x="15" y="5" width="1" height="1" fill="#000"/><rect x="13" y="5" width="1" height="1" fill="#000"/><rect x="5" y="5" width="1" height="1" fill="#000"/><rect x="7" y="5" width="1" height="1" fill="#000"/><rect x="9" y="5" width="1" height="1" fill="#000"/><rect x="11" y="5" width="1" height="1" fill="#000"/><rect x="2" y="6" width="1" height="1" fill="#000"/><rect x="2" y="8" width="1" height="1" fill="#000"/><rect x="2" y="10" width="1" height="1" fill="#000"/><rect x="3" y="12" width="1" height="1" fill="#000"/><rect x="4" y="14" width="1" height="1" fill="#000"/><rect x="6" y="14" width="1" height="1" fill="#000"/><rect x="8" y="14" width="1" height="1" fill="#000"/><rect x="10" y="14" width="1" height="1" fill="#000"/><rect x="12" y="14" width="1" height="1" fill="#000"/><rect x="14" y="12" width="1" height="1" fill="#000"/><rect x="15" y="11" width="1" height="1" fill="#000"/><rect x="6" y="10" width="1" height="1" fill="#000"/><rect x="8" y="10" width="1" height="1" fill="#000"/><rect x="10" y="10" width="1" height="1" fill="#000"/><rect x="12" y="10" width="1" height="1" fill="#000"/></svg>
<div style="left:23px;top:212px;width:1031px;height:322px;background:#D4D0C8;border:1px solid;border-color:#D4D0C8 #404040 #404040 #D4D0C8;box-shadow:inset 1px 1px #fff,inset -1px -1px #808080;"></div>
<div style="left:26px;top:215px;width:1025px;height:18px;background:#808080;"></div>
<svg style="position:absolute;left:28px;top:216px" width="12" height="12" viewBox="0 0 12 12" shape-rendering="crispEdges">
<path d="M0 1h8v-1h3v12H0z" fill="#a8e8f0"/><rect x="0" y="0" width="3" height="6" fill="#40b8d0"/>
<rect x="7" y="1" width="4" height="5" fill="#50c0a0"/>
<rect x="3" y="1" width="3" height="4" fill="#c01040"/><rect x="3" y="1" width="2" height="1" fill="#ff80c0"/>
<path d="M7 5h2v1h1v3H7z" fill="#c01030"/>
<path d="M2 7h3v1h1v3H1V9h1z" fill="#0a0a90"/>
<rect x="7" y="9" width="4" height="2" fill="#60d0c0"/></svg>
<div class="t" style="left:46px;top:217px;font-size:11px;line-height:15px;color:#D4D0C8;font-weight:bold;letter-spacing:0.65px;-webkit-text-stroke:0.3px #D4D0C8;">Объекты абонента [Договор/соглашение № 1321]</div>
<div style="left:999px;top:217px;width:16px;height:14px;background:#D4D0C8;border:1px solid;border-color:#fff #404040 #404040 #fff;box-shadow:inset -1px -1px #808080;"></div>
<div style="left:1015px;top:217px;width:16px;height:14px;background:#D4D0C8;border:1px solid;border-color:#fff #404040 #404040 #fff;box-shadow:inset -1px -1px #808080;"></div>
<div style="left:1033px;top:217px;width:16px;height:14px;background:#D4D0C8;border:1px solid;border-color:#fff #404040 #404040 #fff;box-shadow:inset -1px -1px #808080;"></div>
<div style="left:1003px;top:226px;width:6px;height:2px;background:#000;"></div>
<div style="left:1018px;top:219px;width:9px;height:9px;border:1px solid #000;border-top-width:2px;"></div>
<svg style="position:absolute;left:1037px;top:220px" width="8" height="7" viewBox="0 0 8 7"><path d="M0 0h2l2 2.5L6 0h2L5 3.5 8 7H6L4 4.5 2 7H0l3-3.5z" fill="#000"/></svg>
<div style="left:37px;top:242px;width:1005px;height:248px;border:1px solid #fff;"></div>
<div style="left:36px;top:241px;width:1005px;height:248px;border:1px solid #808080;"></div>
<div class="t" style="left:43px;top:244px;font-size:12px;line-height:16px;color:#000;">Лицевой счет</div>
<div class="t" style="left:221px;top:244px;font-size:12px;line-height:16px;color:#000;">Название</div>
<div class="t" style="left:414px;top:244px;font-size:12px;line-height:16px;color:#000;">Открыт</div>
<div class="t" style="left:480px;top:244px;font-size:12px;line-height:16px;color:#000;">Действует с</div>
<div class="t" style="left:586px;top:244px;font-size:12px;line-height:16px;color:#000;">по</div>
<div class="t" style="left:665px;top:244px;font-size:12px;line-height:16px;color:#000;">Водозабор</div>
<div class="t" style="left:809px;top:244px;font-size:12px;line-height:16px;color:#000;">Статус</div>
<div class="t" style="left:986px;top:244px;font-size:12px;line-height:16px;color:#000;">Осн. л/с</div>
<div style="left:41px;top:259px;width:80px;height:19px;background:#FFFFC8;border:1px solid;border-color:#808080 #fff #fff #808080;box-shadow:inset 1px 1px #404040,inset -1px -1px #D4D0C8;"></div>
<div class="t" style="left:43px;top:261px;font-size:12px;line-height:16px;color:#808080;">1321/1</div>
<div style="left:121px;top:259px;width:256px;height:19px;background:#FFFFC8;border:1px solid;border-color:#808080 #fff #fff #808080;box-shadow:inset 1px 1px #404040,inset -1px -1px #D4D0C8;"></div>
<div class="t" style="left:123px;top:261px;font-size:12px;line-height:16px;color:#808080;">ООО Гарант</div>
<div style="left:377px;top:259px;width:18px;height:19px;background:#D4D0C8;border:1px solid;border-color:#fff #404040 #404040 #fff;box-shadow:inset -1px -1px #808080;"></div>
<svg style="position:absolute;left:377px;top:259px" width="19" height="19" viewBox="0 0 19 19" shape-rendering="crispEdges"><rect x="3" y="5" width="11" height="6" fill="#ececf6"/><path d="M5 10.5h9.5l1.5 1-3 3H4.5l-1.5-2z" fill="#eaea70"/><rect x="12" y="2" width="1" height="1" fill="#000"/><rect x="16" y="2" width="1" height="1" fill="#000"/><rect x="16" y="4" width="1" height="1" fill="#000"/><rect x="15" y="5" width="1" height="1" fill="#000"/><rect x="13" y="5" width="1" height="1" fill="#000"/><rect x="5" y="5" width="1" height="1" fill="#000"/><rect x="7" y="5" width="1" height="1" fill="#000"/><rect x="9" y="5" width="1" height="1" fill="#000"/><rect x="11" y="5" width="1" height="1" fill="#000"/><rect x="2" y="6" width="1" height="1" fill="#000"/><rect x="2" y="8" width="1" height="1" fill="#000"/><rect x="2" y="10" width="1" height="1" fill="#000"/><rect x="3" y="12" width="1" height="1" fill="#000"/><rect x="4" y="14" width="1" height="1" fill="#000"/><rect x="6" y="14" width="1" height="1" fill="#000"/><rect x="8" y="14" width="1" height="1" fill="#000"/><rect x="10" y="14" width="1" height="1" fill="#000"/><rect x="12" y="14" width="1" height="1" fill="#000"/><rect x="14" y="12" width="1" height="1" fill="#000"/><rect x="15" y="11" width="1" height="1" fill="#000"/><rect x="6" y="10" width="1" height="1" fill="#000"/><rect x="8" y="10" width="1" height="1" fill="#000"/><rect x="10" y="10" width="1" height="1" fill="#000"/><rect x="12" y="10" width="1" height="1" fill="#000"/></svg>
<div style="left:395px;top:259px;width:79px;height:19px;background:#FFFFC8;border:1px solid;border-color:#808080 #fff #fff #808080;box-shadow:inset 1px 1px #404040,inset -1px -1px #D4D0C8;"></div>
<div class="t" style="left:397px;top:261px;font-size:12px;line-height:16px;color:#808080;">01.01.2008</div>
<div style="left:474px;top:259px;width:79px;height:19px;background:#FFFFC8;border:1px solid;border-color:#808080 #fff #fff #808080;box-shadow:inset 1px 1px #404040,inset -1px -1px #D4D0C8;"></div>
<div class="t" style="left:476px;top:261px;font-size:12px;line-height:16px;color:#808080;">01.01.2008</div>
<div style="left:553px;top:259px;width:80px;height:19px;background:#FFFFC8;border:1px solid;border-color:#808080 #fff #fff #808080;box-shadow:inset 1px 1px #404040,inset -1px -1px #D4D0C8;"></div>
<div style="left:634px;top:259px;width:122px;height:19px;background:#FFFFC8;border:1px solid;border-color:#808080 #fff #fff #808080;box-shadow:inset 1px 1px #404040,inset -1px -1px #D4D0C8;"></div>
<div class="t" style="left:636px;top:261px;font-size:12px;line-height:16px;color:#808080;">Падь, 1-й подъем</div>
<div style="left:756px;top:259px;width:18px;height:19px;background:#D4D0C8;border:1px solid;border-color:#fff #404040 #404040 #fff;box-shadow:inset -1px -1px #808080;"></div>
<svg style="position:absolute;left:756px;top:259px" width="19" height="19" viewBox="0 0 19 19" shape-rendering="crispEdges"><rect x="3" y="5" width="11" height="6" fill="#ececf6"/><path d="M5 10.5h9.5l1.5 1-3 3H4.5l-1.5-2z" fill="#eaea70"/><rect x="12" y="2" width="1" height="1" fill="#000"/><rect x="16" y="2" width="1" height="1" fill="#000"/><rect x="16" y="4" width="1" height="1" fill="#000"/><rect x="15" y="5" width="1" height="1" fill="#000"/><rect x="13" y="5" width="1" height="1" fill="#000"/><rect x="5" y="5" width="1" height="1" fill="#000"/><rect x="7" y="5" width="1" height="1" fill="#000"/><rect x="9" y="5" width="1" height="1" fill="#000"/><rect x="11" y="5" width="1" height="1" fill="#000"/><rect x="2" y="6" width="1" height="1" fill="#000"/><rect x="2" y="8" width="1" height="1" fill="#000"/><rect x="2" y="10" width="1" height="1" fill="#000"/><rect x="3" y="12" width="1" height="1" fill="#000"/><rect x="4" y="14" width="1" height="1" fill="#000"/><rect x="6" y="14" width="1" height="1" fill="#000"/><rect x="8" y="14" width="1" height="1" fill="#000"/><rect x="10" y="14" width="1" height="1" fill="#000"/><rect x="12" y="14" width="1" height="1" fill="#000"/><rect x="14" y="12" width="1" height="1" fill="#000"/><rect x="15" y="11" width="1" height="1" fill="#000"/><rect x="6" y="10" width="1" height="1" fill="#000"/><rect x="8" y="10" width="1" height="1" fill="#000"/><rect x="10" y="10" width="1" height="1" fill="#000"/><rect x="12" y="10" width="1" height="1" fill="#000"/></svg>
<div style="left:774px;top:259px;width:107px;height:19px;background:#FFFFC8;border:1px solid;border-color:#808080 #fff #fff #808080;box-shadow:inset 1px 1px #404040,inset -1px -1px #D4D0C8;"></div>
<div class="t" style="left:776px;top:261px;font-size:12px;line-height:16px;color:#808080;">ОткрытыйОбъект</div>
<div style="left:881px;top:259px;width:18px;height:19px;background:#D4D0C8;border:1px solid;border-color:#fff #404040 #404040 #fff;box-shadow:inset -1px -1px #808080;"></div>
<svg style="position:absolute;left:881px;top:259px" width="19" height="19" viewBox="0 0 19 19" shape-rendering="crispEdges"><rect x="3" y="5" width="11" height="6" fill="#ececf6"/><path d="M5 10.5h9.5l1.5 1-3 3H4.5l-1.5-2z" fill="#eaea70"/><rect x="12" y="2" width="1" height="1" fill="#000"/><rect x="16" y="2" width="1" height="1" fill="#000"/><rect x="16" y="4" width="1" height="1" fill="#000"/><rect x="15" y="5" width="1" height="1" fill="#000"/><rect x="13" y="5" width="1" height="1" fill="#000"/><rect x="5" y="5" width="1" height="1" fill="#000"/><rect x="7" y="5" width="1" height="1" fill="#000"/><rect x="9" y="5" width="1" height="1" fill="#000"/><rect x="11" y="5" width="1" height="1" fill="#000"/><rect x="2" y="6" width="1" height="1" fill="#000"/><rect x="2" y="8" width="1" height="1" fill="#000"/><rect x="2" y="10" width="1" height="1" fill="#000"/><rect x="3" y="12" width="1" height="1" fill="#000"/><rect x="4" y="14" width="1" height="1" fill="#000"/><rect x="6" y="14" width="1" height="1" fill="#000"/><rect x="8" y="14" width="1" height="1" fill="#000"/><rect x="10" y="14" width="1" height="1" fill="#000"/><rect x="12" y="14" width="1" height="1" fill="#000"/><rect x="14" y="12" width="1" height="1" fill="#000"/><rect x="15" y="11" width="1" height="1" fill="#000"/><rect x="6" y="10" width="1" height="1" fill="#000"/><rect x="8" y="10" width="1" height="1" fill="#000"/><rect x="10" y="10" width="1" height="1" fill="#000"/><rect x="12" y="10" width="1" height="1" fill="#000"/></svg>
<div style="left:903px;top:262px;width:13px;height:13px;background:#D4D0C8;border:1px solid;border-color:#808080 #fff #fff #808080;box-shadow:inset 1px 1px #404040,inset -1px -1px #D4D0C8;"></div>
<div class="t" style="left:922px;top:261px;font-size:12px;line-height:16px;color:#808080;">р/к</div>
<div style="left:942px;top:262px;width:13px;height:13px;background:#D4D0C8;border:1px solid;border-color:#808080 #fff #fff #808080;box-shadow:inset 1px 1px #404040,inset -1px -1px #D4D0C8;"></div>
<div class="t" style="left:960px;top:261px;font-size:12px;line-height:16px;color:#808080;">тариф</div>
<div style="left:999px;top:262px;width:13px;height:13px;background:#D4D0C8;border:1px solid;border-color:#808080 #fff #fff #808080;box-shadow:inset 1px 1px #404040,inset -1px -1px #D4D0C8;"></div>
<div style="left:1017px;top:259px;width:18px;height:19px;background:#D4D0C8;border:1px solid;border-color:#fff #404040 #404040 #fff;box-shadow:inset -1px -1px #808080;"></div>
<div class="t" style="left:826.5px;top:263px;width:400px;text-align:center;font-size:11px;line-height:15px;color:#808080;letter-spacing:1px;">...</div>
<div style="left:41px;top:278px;width:80px;height:19px;background:#E0DFE3;border:1px solid;border-color:#808080 #fff #fff #808080;box-shadow:inset 1px 1px #404040,inset -1px -1px #D4D0C8;"></div>
<div style="left:903px;top:281px;width:13px;height:13px;background:#D4D0C8;border:1px solid;border-color:#808080 #fff #fff #808080;box-shadow:inset 1px 1px #404040,inset -1px -1px #D4D0C8;"></div>
<div class="t" style="left:922px;top:280px;font-size:12px;line-height:16px;color:#808080;">р/к</div>
<div style="left:942px;top:281px;width:13px;height:13px;background:#D4D0C8;border:1px solid;border-color:#808080 #fff #fff #808080;box-shadow:inset 1px 1px #404040,inset -1px -1px #D4D0C8;"></div>
<div class="t" style="left:960px;top:280px;font-size:12px;line-height:16px;color:#808080;">тариф</div>
<div style="left:999px;top:281px;width:13px;height:13px;background:#D4D0C8;border:1px solid;border-color:#808080 #fff #fff #808080;box-shadow:inset 1px 1px #404040,inset -1px -1px #D4D0C8;"></div>
<div style="left:1017px;top:278px;width:18px;height:19px;background:#D4D0C8;border:1px solid;border-color:#fff #404040 #404040 #fff;box-shadow:inset -1px -1px #808080;"></div>
<div class="t" style="left:826.5px;top:282px;width:400px;text-align:center;font-size:11px;line-height:15px;color:#808080;letter-spacing:1px;">...</div>
<div style="left:41px;top:297px;width:80px;height:18px;background:#E0DFE3;border:1px solid;border-color:#808080 #fff #fff #808080;box-shadow:inset 1px 1px #404040,inset -1px -1px #D4D0C8;"></div>
<div style="left:903px;top:300px;width:13px;height:13px;background:#D4D0C8;border:1px solid;border-color:#808080 #fff #fff #808080;box-shadow:inset 1px 1px #404040,inset -1px -1px #D4D0C8;"></div>
<div class="t" style="left:922px;top:299px;font-size:12px;line-height:16px;color:#808080;">р/к</div>
<div style="left:942px;top:300px;width:13px;height:13px;background:#D4D0C8;border:1px solid;border-color:#808080 #fff #fff #808080;box-shadow:inset 1px 1px #404040,inset -1px -1px #D4D0C8;"></div>
<div class="t" style="left:960px;top:299px;font-size:12px;line-height:16px;color:#808080;">тариф</div>
<div style="left:999px;top:300px;width:13px;height:13px;background:#D4D0C8;border:1px solid;border-color:#808080 #fff #fff #808080;box-shadow:inset 1px 1px #404040,inset -1px -1px #D4D0C8;"></div>
<div style="left:1017px;top:297px;width:18px;height:18px;background:#D4D0C8;border:1px solid;border-color:#fff #404040 #404040 #fff;box-shadow:inset -1px -1px #808080;"></div>
<div class="t" style="left:826.5px;top:300px;width:400px;text-align:center;font-size:11px;line-height:15px;color:#808080;letter-spacing:1px;">...</div>
<div style="left:41px;top:315px;width:80px;height:19px;background:#E0DFE3;border:1px solid;border-color:#808080 #fff #fff #808080;box-shadow:inset 1px 1px #404040,inset -1px -1px #D4D0C8;"></div>
<div style="left:903px;top:318px;width:13px;height:13px;background:#D4D0C8;border:1px solid;border-color:#808080 #fff #fff #808080;box-shadow:inset 1px 1px #404040,inset -1px -1px #D4D0C8;"></div>
<div class="t" style="left:922px;top:317px;font-size:12px;line-height:16px;color:#808080;">р/к</div>
<div style="left:942px;top:318px;width:13px;height:13px;background:#D4D0C8;border:1px solid;border-color:#808080 #fff #fff #808080;box-shadow:inset 1px 1px #404040,inset -1px -1px #D4D0C8;"></div>
<div class="t" style="left:960px;top:317px;font-size:12px;line-height:16px;color:#808080;">тариф</div>
<div style="left:999px;top:318px;width:13px;height:13px;background:#D4D0C8;border:1px solid;border-color:#808080 #fff #fff #808080;box-shadow:inset 1px 1px #404040,inset -1px -1px #D4D0C8;"></div>
<div style="left:1017px;top:315px;width:18px;height:19px;background:#D4D0C8;border:1px solid;border-color:#fff #404040 #404040 #fff;box-shadow:inset -1px -1px #808080;"></div>
<div class="t" style="left:826.5px;top:319px;width:400px;text-align:center;font-size:11px;line-height:15px;color:#808080;letter-spacing:1px;">...</div>
<div style="left:41px;top:334px;width:80px;height:19px;background:#E0DFE3;border:1px solid;border-color:#808080 #fff #fff #808080;box-shadow:inset 1px 1px #404040,inset -1px -1px #D4D0C8;"></div>
<div style="left:903px;top:337px;width:13px;height:13px;background:#D4D0C8;border:1px solid;border-color:#808080 #fff #fff #808080;box-shadow:inset 1px 1px #404040,inset -1px -1px #D4D0C8;"></div>
<div class="t" style="left:922px;top:336px;font-size:12px;line-height:16px;color:#808080;">р/к</div>
<div style="left:942px;top:337px;width:13px;height:13px;background:#D4D0C8;border:1px solid;border-color:#808080 #fff #fff #808080;box-shadow:inset 1px 1px #404040,inset -1px -1px #D4D0C8;"></div>
<div class="t" style="left:960px;top:336px;font-size:12px;line-height:16px;color:#808080;">тариф</div>
<div style="left:999px;top:337px;width:13px;height:13px;background:#D4D0C8;border:1px solid;border-color:#808080 #fff #fff #808080;box-shadow:inset 1px 1px #404040,inset -1px -1px #D4D0C8;"></div>
<div style="left:1017px;top:334px;width:18px;height:19px;background:#D4D0C8;border:1px solid;border-color:#fff #404040 #404040 #fff;box-shadow:inset -1px -1px #808080;"></div>
<div class="t" style="left:826.5px;top:338px;width:400px;text-align:center;font-size:11px;line-height:15px;color:#808080;letter-spacing:1px;">...</div>
<div style="left:41px;top:353px;width:80px;height:18px;background:#E0DFE3;border:1px solid;border-color:#808080 #fff #fff #808080;box-shadow:inset 1px 1px #404040,inset -1px -1px #D4D0C8;"></div>
<div style="left:903px;top:356px;width:13px;height:13px;background:#D4D0C8;border:1px solid;border-color:#808080 #fff #fff #808080;box-shadow:inset 1px 1px #404040,inset -1px -1px #D4D0C8;"></div>
<div class="t" style="left:922px;top:355px;font-size:12px;line-height:16px;color:#808080;">р/к</div>
<div style="left:942px;top:356px;width:13px;height:13px;background:#D4D0C8;border:1px solid;border-color:#808080 #fff #fff #808080;box-shadow:inset 1px 1px #404040,inset -1px -1px #D4D0C8;"></div>
<div class="t" style="left:960px;top:355px;font-size:12px;line-height:16px;color:#808080;">тариф</div>
<div style="left:999px;top:356px;width:13px;height:13px;background:#D4D0C8;border:1px solid;border-color:#808080 #fff #fff #808080;box-shadow:inset 1px 1px #404040,inset -1px -1px #D4D0C8;"></div>
<div style="left:1017px;top:353px;width:18px;height:18px;background:#D4D0C8;border:1px solid;border-color:#fff #404040 #404040 #fff;box-shadow:inset -1px -1px #808080;"></div>
<div class="t" style="left:826.5px;top:356px;width:400px;text-align:center;font-size:11px;line-height:15px;color:#808080;letter-spacing:1px;">...</div>
<div style="left:41px;top:371px;width:80px;height:19px;background:#E0DFE3;border:1px solid;border-color:#808080 #fff #fff #808080;box-shadow:inset 1px 1px #404040,inset -1px -1px #D4D0C8;"></div>
<div style="left:903px;top:374px;width:13px;height:13px;background:#D4D0C8;border:1px solid;border-color:#808080 #fff #fff #808080;box-shadow:inset 1px 1px #404040,inset -1px -1px #D4D0C8;"></div>
<div class="t" style="left:922px;top:373px;font-size:12px;line-height:16px;color:#808080;">р/к</div>
<div style="left:942px;top:374px;width:13px;height:13px;background:#D4D0C8;border:1px solid;border-color:#808080 #fff #fff #808080;box-shadow:inset 1px 1px #404040,inset -1px -1px #D4D0C8;"></div>
<div class="t" style="left:960px;top:373px;font-size:12px;line-height:16px;color:#808080;">тариф</div>
<div style="left:999px;top:374px;width:13px;height:13px;background:#D4D0C8;border:1px solid;border-color:#808080 #fff #fff #808080;box-shadow:inset 1px 1px #404040,inset -1px -1px #D4D0C8;"></div>
<div style="left:1017px;top:371px;width:18px;height:19px;background:#D4D0C8;border:1px solid;border-color:#fff #404040 #404040 #fff;box-shadow:inset -1px -1px #808080;"></div>
<div class="t" style="left:826.5px;top:375px;width:400px;text-align:center;font-size:11px;line-height:15px;color:#808080;letter-spacing:1px;">...</div>
<div style="left:41px;top:390px;width:80px;height:19px;background:#E0DFE3;border:1px solid;border-color:#808080 #fff #fff #808080;box-shadow:inset 1px 1px #404040,inset -1px -1px #D4D0C8;"></div>
<div style="left:903px;top:393px;width:13px;height:13px;background:#D4D0C8;border:1px solid;border-color:#808080 #fff #fff #808080;box-shadow:inset 1px 1px #404040,inset -1px -1px #D4D0C8;"></div>
<div class="t" style="left:922px;top:392px;font-size:12px;line-height:16px;color:#808080;">р/к</div>
<div style="left:942px;top:393px;width:13px;height:13px;background:#D4D0C8;border:1px solid;border-color:#808080 #fff #fff #808080;box-shadow:inset 1px 1px #404040,inset -1px -1px #D4D0C8;"></div>
<div class="t" style="left:960px;top:392px;font-size:12px;line-height:16px;color:#808080;">тариф</div>
<div style="left:999px;top:393px;width:13px;height:13px;background:#D4D0C8;border:1px solid;border-color:#808080 #fff #fff #808080;box-shadow:inset 1px 1px #404040,inset -1px -1px #D4D0C8;"></div>
<div style="left:1017px;top:390px;width:18px;height:19px;background:#D4D0C8;border:1px solid;border-color:#fff #404040 #404040 #fff;box-shadow:inset -1px -1px #808080;"></div>
<div class="t" style="left:826.5px;top:394px;width:400px;text-align:center;font-size:11px;line-height:15px;color:#808080;letter-spacing:1px;">...</div>
<div style="left:41px;top:409px;width:80px;height:18px;background:#E0DFE3;border:1px solid;border-color:#808080 #fff #fff #808080;box-shadow:inset 1px 1px #404040,inset -1px -1px #D4D0C8;"></div>
<div style="left:903px;top:412px;width:13px;height:13px;background:#D4D0C8;border:1px solid;border-color:#808080 #fff #fff #808080;box-shadow:inset 1px 1px #404040,inset -1px -1px #D4D0C8;"></div>
<div class="t" style="left:922px;top:411px;font-size:12px;line-height:16px;color:#808080;">р/к</div>
<div style="left:942px;top:412px;width:13px;height:13px;background:#D4D0C8;border:1px solid;border-color:#808080 #fff #fff #808080;box-shadow:inset 1px 1px #404040,inset -1px -1px #D4D0C8;"></div>
<div class="t" style="left:960px;top:411px;font-size:12px;line-height:16px;color:#808080;">тариф</div>
<div style="left:999px;top:412px;width:13px;height:13px;background:#D4D0C8;border:1px solid;border-color:#808080 #fff #fff #808080;box-shadow:inset 1px 1px #404040,inset -1px -1px #D4D0C8;"></div>
<div style="left:1017px;top:409px;width:18px;height:18px;background:#D4D0C8;border:1px solid;border-color:#fff #404040 #404040 #fff;box-shadow:inset -1px -1px #808080;"></div>
<div class="t" style="left:826.5px;top:412px;width:400px;text-align:center;font-size:11px;line-height:15px;color:#808080;letter-spacing:1px;">...</div>
<div style="left:41px;top:427px;width:80px;height:19px;background:#E0DFE3;border:1px solid;border-color:#808080 #fff #fff #808080;box-shadow:inset 1px 1px #404040,inset -1px -1px #D4D0C8;"></div>
<div style="left:903px;top:430px;width:13px;height:13px;background:#D4D0C8;border:1px solid;border-color:#808080 #fff #fff #808080;box-shadow:inset 1px 1px #404040,inset -1px -1px #D4D0C8;"></div>
<div class="t" style="left:922px;top:429px;font-size:12px;line-height:16px;color:#808080;">р/к</div>
<div style="left:942px;top:430px;width:13px;height:13px;background:#D4D0C8;border:1px solid;border-color:#808080 #fff #fff #808080;box-shadow:inset 1px 1px #404040,inset -1px -1px #D4D0C8;"></div>
<div class="t" style="left:960px;top:429px;font-size:12px;line-height:16px;color:#808080;">тариф</div>
<div style="left:999px;top:430px;width:13px;height:13px;background:#D4D0C8;border:1px solid;border-color:#808080 #fff #fff #808080;box-shadow:inset 1px 1px #404040,inset -1px -1px #D4D0C8;"></div>
<div style="left:1017px;top:427px;width:18px;height:19px;background:#D4D0C8;border:1px solid;border-color:#fff #404040 #404040 #fff;box-shadow:inset -1px -1px #808080;"></div>
<div class="t" style="left:826.5px;top:431px;width:400px;text-align:center;font-size:11px;line-height:15px;color:#808080;letter-spacing:1px;">...</div>
<div style="left:41px;top:446px;width:80px;height:19px;background:#E0DFE3;border:1px solid;border-color:#808080 #fff #fff #808080;box-shadow:inset 1px 1px #404040,inset -1px -1px #D4D0C8;"></div>
<div style="left:903px;top:449px;width:13px;height:13px;background:#D4D0C8;border:1px solid;border-color:#808080 #fff #fff #808080;box-shadow:inset 1px 1px #404040,inset -1px -1px #D4D0C8;"></div>
<div class="t" style="left:922px;top:448px;font-size:12px;line-height:16px;color:#808080;">р/к</div>
<div style="left:942px;top:449px;width:13px;height:13px;background:#D4D0C8;border:1px solid;border-color:#808080 #fff #fff #808080;box-shadow:inset 1px 1px #404040,inset -1px -1px #D4D0C8;"></div>
<div class="t" style="left:960px;top:448px;font-size:12px;line-height:16px;color:#808080;">тариф</div>
<div style="left:999px;top:449px;width:13px;height:13px;background:#D4D0C8;border:1px solid;border-color:#808080 #fff #fff #808080;box-shadow:inset 1px 1px #404040,inset -1px -1px #D4D0C8;"></div>
<div style="left:1017px;top:446px;width:18px;height:19px;background:#D4D0C8;border:1px solid;border-color:#fff #404040 #404040 #fff;box-shadow:inset -1px -1px #808080;"></div>
<div class="t" style="left:826.5px;top:450px;width:400px;text-align:center;font-size:11px;line-height:15px;color:#808080;letter-spacing:1px;">...</div>
<div style="left:41px;top:465px;width:80px;height:18px;background:#E0DFE3;border:1px solid;border-color:#808080 #fff #fff #808080;box-shadow:inset 1px 1px #404040,inset -1px -1px #D4D0C8;"></div>
<div style="left:903px;top:468px;width:13px;height:13px;background:#D4D0C8;border:1px solid;border-color:#808080 #fff #fff #808080;box-shadow:inset 1px 1px #404040,inset -1px -1px #D4D0C8;"></div>
<div class="t" style="left:922px;top:467px;font-size:12px;line-height:16px;color:#808080;">р/к</div>
<div style="left:942px;top:468px;width:13px;height:13px;background:#D4D0C8;border:1px solid;border-color:#808080 #fff #fff #808080;box-shadow:inset 1px 1px #404040,inset -1px -1px #D4D0C8;"></div>
<div class="t" style="left:960px;top:467px;font-size:12px;line-height:16px;color:#808080;">тариф</div>
<div style="left:999px;top:468px;width:13px;height:13px;background:#D4D0C8;border:1px solid;border-color:#808080 #fff #fff #808080;box-shadow:inset 1px 1px #404040,inset -1px -1px #D4D0C8;"></div>
<div style="left:1017px;top:465px;width:18px;height:18px;background:#D4D0C8;border:1px solid;border-color:#fff #404040 #404040 #fff;box-shadow:inset -1px -1px #808080;"></div>
<div class="t" style="left:826.5px;top:468px;width:400px;text-align:center;font-size:11px;line-height:15px;color:#808080;letter-spacing:1px;">...</div>
<div style="left:67px;top:280px;width:839px;height:280px;background:#D4D0C8;border:1px solid;border-color:#D4D0C8 #404040 #404040 #D4D0C8;box-shadow:inset 1px 1px #fff,inset -1px -1px #808080;"></div>
<div style="left:71px;top:284px;width:831px;height:18px;background:#0A246A;"></div>
<svg style="position:absolute;left:73px;top:285px" width="12" height="12" viewBox="0 0 12 12" shape-rendering="crispEdges">
<path d="M0 1h8v-1h3v12H0z" fill="#a8e8f0"/><rect x="0" y="0" width="3" height="6" fill="#40b8d0"/>
<rect x="7" y="1" width="4" height="5" fill="#50c0a0"/>
<rect x="3" y="1" width="3" height="4" fill="#c01040"/><rect x="3" y="1" width="2" height="1" fill="#ff80c0"/>
<path d="M7 5h2v1h1v3H7z" fill="#c01030"/>
<path d="M2 7h3v1h1v3H1V9h1z" fill="#0a0a90"/>
<rect x="7" y="9" width="4" height="2" fill="#60d0c0"/></svg>
<div class="t" style="left:91px;top:286px;font-size:11px;line-height:15px;color:#fff;font-weight:bold;letter-spacing:0.75px;-webkit-text-stroke:0.3px #fff;">Водомеры [Объект № 1321/1]</div>
<div style="left:850px;top:286px;width:16px;height:14px;background:#D4D0C8;border:1px solid;border-color:#fff #404040 #404040 #fff;box-shadow:inset -1px -1px #808080;"></div>
<div style="left:866px;top:286px;width:16px;height:14px;background:#D4D0C8;border:1px solid;border-color:#fff #404040 #404040 #fff;box-shadow:inset -1px -1px #808080;"></div>
<div style="left:884px;top:286px;width:16px;height:14px;background:#D4D0C8;border:1px solid;border-color:#fff #404040 #404040 #fff;box-shadow:inset -1px -1px #808080;"></div>
<div style="left:854px;top:295px;width:6px;height:2px;background:#000;"></div>
<div style="left:869px;top:288px;width:9px;height:9px;border:1px solid #000;border-top-width:2px;"></div>
<svg style="position:absolute;left:888px;top:289px" width="8" height="7" viewBox="0 0 8 7"><path d="M0 0h2l2 2.5L6 0h2L5 3.5 8 7H6L4 4.5 2 7H0l3-3.5z" fill="#000"/></svg>
<div style="left:79px;top:312px;width:817px;height:237px;border:1px solid #fff;"></div>
<div style="left:78px;top:311px;width:817px;height:237px;border:1px solid #808080;"></div>
<div style="left:92px;top:304px;width:74px;height:14px;background:#D4D0C8;"></div>
<div class="t" style="left:98px;top:304px;font-size:13px;line-height:17px;color:#000;">Водомеры</div>
<div class="t" style="left:-79.5px;top:323px;width:400px;text-align:center;font-size:12px;line-height:16px;color:#000;">Код</div>
<div class="t" style="left:-80px;top:337px;width:400px;text-align:center;font-size:12px;line-height:16px;color:#000;">водомера</div>
<div class="t" style="left:39px;top:337px;width:400px;text-align:center;font-size:12px;line-height:16px;color:#000;">Описание</div>
<div class="t" style="left:143px;top:337px;width:400px;text-align:center;font-size:12px;line-height:16px;color:#000;">Группа</div>
<div class="t" style="left:221px;top:337px;width:400px;text-align:center;font-size:12px;line-height:16px;color:#000;">Действует с</div>
<div class="t" style="left:293px;top:337px;width:400px;text-align:center;font-size:12px;line-height:16px;color:#000;">по</div>
<div class="t" style="left:493.5px;top:337px;width:400px;text-align:center;font-size:12px;line-height:16px;color:#000;">Статус</div>
<div class="t" style="left:636px;top:337px;width:400px;text-align:center;font-size:12px;line-height:16px;color:#000;">потребителя</div>
<div class="t" style="left:636px;top:323px;width:400px;text-align:center;font-size:12px;line-height:16px;color:#000;">Наименование</div>
<div style="left:85px;top:357px;width:71px;height:18px;background:#FFFFC8;border:1px solid;border-color:#808080 #fff #fff #808080;box-shadow:inset 1px 1px #404040,inset -1px -1px #D4D0C8;"></div>
<div class="t" style="left:87px;top:358px;font-size:12px;line-height:16px;color:#000;">67568</div>
<div style="left:86px;top:360px;width:2px;height:13px;background:#000;"></div>
<div style="left:156px;top:357px;width:167px;height:18px;background:#FFFFC8;border:1px solid;border-color:#808080 #fff #fff #808080;box-shadow:inset 1px 1px #404040,inset -1px -1px #D4D0C8;"></div>
<div class="t" style="left:158px;top:358px;font-size:12px;line-height:16px;color:#000;">Водомер 1 гр</div>
<div style="left:323px;top:357px;width:40px;height:18px;background:#FFFFC8;border:1px solid;border-color:#808080 #fff #fff #808080;box-shadow:inset 1px 1px #404040,inset -1px -1px #D4D0C8;"></div>
<div class="t" style="left:325px;top:358px;font-size:12px;line-height:16px;color:#000;">1</div>
<div style="left:363px;top:357px;width:20px;height:18px;background:#D4D0C8;border:1px solid;border-color:#fff #404040 #404040 #fff;box-shadow:inset -1px -1px #808080;"></div>
<div class="t" style="left:173.5px;top:360px;width:400px;text-align:center;font-size:11px;line-height:15px;color:#000;letter-spacing:1px;">...</div>
<div style="left:384px;top:357px;width:75px;height:18px;background:#FFFFC8;border:1px solid;border-color:#808080 #fff #fff #808080;box-shadow:inset 1px 1px #404040,inset -1px -1px #D4D0C8;"></div>
<div class="t" style="left:386px;top:358px;font-size:12px;line-height:16px;color:#000;">01.01.2008</div>
<div style="left:460px;top:357px;width:68px;height:18px;background:#FFFFC8;border:1px solid;border-color:#808080 #fff #fff #808080;box-shadow:inset 1px 1px #404040,inset -1px -1px #D4D0C8;"></div>
<div style="left:528px;top:359px;width:13px;height:13px;background:#fff;border:1px solid;border-color:#808080 #fff #fff #808080;box-shadow:inset 1px 1px #404040,inset -1px -1px #D4D0C8;"></div>
<div style="left:572px;top:359px;width:13px;height:13px;background:#fff;border:1px solid;border-color:#808080 #fff #fff #808080;box-shadow:inset 1px 1px #404040,inset -1px -1px #D4D0C8;"></div>
<div style="left:622px;top:357px;width:143px;height:18px;background:#FFFFC8;border:1px solid;border-color:#808080 #fff #fff #808080;box-shadow:inset 1px 1px #404040,inset -1px -1px #D4D0C8;"></div>
<div class="t" style="left:624px;top:358px;font-size:12px;line-height:16px;color:#000;">ОткрытыйОбъект</div>
<div style="left:765px;top:357px;width:19px;height:18px;background:#D4D0C8;border:1px solid;border-color:#fff #404040 #404040 #fff;box-shadow:inset -1px -1px #808080;"></div>
<svg style="position:absolute;left:765px;top:357px" width="19" height="19" viewBox="0 0 19 19" shape-rendering="crispEdges"><path d="M2.5 5.5h4l1 1h5v2.5" fill="#e0e040" stroke="#000"/><path d="M2.5 5.5v8h10v-5" fill="#e8e850" stroke="#000"/><path d="M2.5 13.5l3-5h11l-4 5z" fill="#f0f070" stroke="#000"/><path d="M4 12.5h2M8 12.5h2M6 11h2M10 11h2" stroke="#a0a030"/><path d="M10.5 3.5c1-1 3-1.5 4 0l.5 2M14 5.5l1 1 1-1.5" fill="none" stroke="#000"/></svg>
<div style="left:784px;top:357px;width:106px;height:18px;background:#C8C8D0;border:1px solid;border-color:#808080 #fff #fff #808080;box-shadow:inset 1px 1px #404040,inset -1px -1px #D4D0C8;"></div>
<div class="t" style="left:787px;top:358px;font-size:12px;line-height:16px;color:#000;">Потребитель 1</div>
<div class="t" style="left:543px;top:356px;font-size:12px;line-height:16px;color:#000;">Техн</div>
<div class="t" style="left:587px;top:356px;font-size:12px;line-height:16px;color:#000;">Ливн</div>
<div style="left:85px;top:375px;width:71px;height:19px;background:#E0DFE3;border:1px solid;border-color:#808080 #fff #fff #808080;box-shadow:inset 1px 1px #404040,inset -1px -1px #D4D0C8;"></div>
<div style="left:156px;top:375px;width:167px;height:19px;background:#fff;border:1px solid;border-color:#808080 #fff #fff #808080;box-shadow:inset 1px 1px #404040,inset -1px -1px #D4D0C8;"></div>
<div style="left:323px;top:375px;width:40px;height:19px;background:#fff;border:1px solid;border-color:#808080 #fff #fff #808080;box-shadow:inset 1px 1px #404040,inset -1px -1px #D4D0C8;"></div>
<div style="left:363px;top:375px;width:20px;height:19px;background:#D4D0C8;border:1px solid;border-color:#fff #404040 #404040 #fff;box-shadow:inset -1px -1px #808080;"></div>
<div class="t" style="left:173.5px;top:379px;width:400px;text-align:center;font-size:11px;line-height:15px;color:#808080;letter-spacing:1px;">...</div>
<div style="left:384px;top:375px;width:75px;height:19px;background:#fff;border:1px solid;border-color:#808080 #fff #fff #808080;box-shadow:inset 1px 1px #404040,inset -1px -1px #D4D0C8;"></div>
<div style="left:460px;top:375px;width:68px;height:19px;background:#E0DFE3;border:1px solid;border-color:#808080 #fff #fff #808080;box-shadow:inset 1px 1px #404040,inset -1px -1px #D4D0C8;"></div>
<div style="left:528px;top:377px;width:13px;height:13px;background:#D4D0C8;border:1px solid;border-color:#808080 #fff #fff #808080;box-shadow:inset 1px 1px #404040,inset -1px -1px #D4D0C8;"></div>
<div style="left:572px;top:377px;width:13px;height:13px;background:#D4D0C8;border:1px solid;border-color:#808080 #fff #fff #808080;box-shadow:inset 1px 1px #404040,inset -1px -1px #D4D0C8;"></div>
<div style="left:622px;top:375px;width:143px;height:19px;background:#fff;border:1px solid;border-color:#808080 #fff #fff #808080;box-shadow:inset 1px 1px #404040,inset -1px -1px #D4D0C8;"></div>
<div style="left:765px;top:375px;width:19px;height:19px;background:#D4D0C8;border:1px solid;border-color:#fff #404040 #404040 #fff;box-shadow:inset -1px -1px #808080;"></div>
<svg style="position:absolute;left:765px;top:375px" width="19" height="19" viewBox="0 0 19 19" shape-rendering="crispEdges"><rect x="3" y="5" width="11" height="6" fill="#ececf6"/><path d="M5 10.5h9.5l1.5 1-3 3H4.5l-1.5-2z" fill="#eaea70"/><rect x="12" y="2" width="1" height="1" fill="#000"/><rect x="16" y="2" width="1" height="1" fill="#000"/><rect x="16" y="4" width="1" height="1" fill="#000"/><rect x="15" y="5" width="1" height="1" fill="#000"/><rect x="13" y="5" width="1" height="1" fill="#000"/><rect x="5" y="5" width="1" height="1" fill="#000"/><rect x="7" y="5" width="1" height="1" fill="#000"/><rect x="9" y="5" width="1" height="1" fill="#000"/><rect x="11" y="5" width="1" height="1" fill="#000"/><rect x="2" y="6" width="1" height="1" fill="#000"/><rect x="2" y="8" width="1" height="1" fill="#000"/><rect x="2" y="10" width="1" height="1" fill="#000"/><rect x="3" y="12" width="1" height="1" fill="#000"/><rect x="4" y="14" width="1" height="1" fill="#000"/><rect x="6" y="14" width="1" height="1" fill="#000"/><rect x="8" y="14" width="1" height="1" fill="#000"/><rect x="10" y="14" width="1" height="1" fill="#000"/><rect x="12" y="14" width="1" height="1" fill="#000"/><rect x="14" y="12" width="1" height="1" fill="#000"/><rect x="15" y="11" width="1" height="1" fill="#000"/><rect x="6" y="10" width="1" height="1" fill="#000"/><rect x="8" y="10" width="1" height="1" fill="#000"/><rect x="10" y="10" width="1" height="1" fill="#000"/><rect x="12" y="10" width="1" height="1" fill="#000"/></svg>
<div style="left:784px;top:375px;width:106px;height:19px;background:#C8C8D0;border:1px solid;border-color:#808080 #fff #fff #808080;box-shadow:inset 1px 1px #404040,inset -1px -1px #D4D0C8;"></div>
<div class="t" style="left:543px;top:374px;font-size:12px;line-height:16px;color:#000;">Техн</div>
<div class="t" style="left:587px;top:374px;font-size:12px;line-height:16px;color:#000;">Ливн</div>
<div style="left:85px;top:394px;width:71px;height:19px;background:#E0DFE3;border:1px solid;border-color:#808080 #fff #fff #808080;box-shadow:inset 1px 1px #404040,inset -1px -1px #D4D0C8;"></div>
<div style="left:156px;top:394px;width:167px;height:19px;background:#fff;border:1px solid;border-color:#808080 #fff #fff #808080;box-shadow:inset 1px 1px #404040,inset -1px -1px #D4D0C8;"></div>
<div style="left:323px;top:394px;width:40px;height:19px;background:#fff;border:1px solid;border-color:#808080 #fff #fff #808080;box-shadow:inset 1px 1px #404040,inset -1px -1px #D4D0C8;"></div>
<div style="left:363px;top:394px;width:20px;height:19px;background:#D4D0C8;border:1px solid;border-color:#fff #404040 #404040 #fff;box-shadow:inset -1px -1px #808080;"></div>
<div class="t" style="left:173.5px;top:398px;width:400px;text-align:center;font-size:11px;line-height:15px;color:#808080;letter-spacing:1px;">...</div>
<div style="left:384px;top:394px;width:75px;height:19px;background:#fff;border:1px solid;border-color:#808080 #fff #fff #808080;box-shadow:inset 1px 1px #404040,inset -1px -1px #D4D0C8;"></div>
<div style="left:460px;top:394px;width:68px;height:19px;background:#E0DFE3;border:1px solid;border-color:#808080 #fff #fff #808080;box-shadow:inset 1px 1px #404040,inset -1px -1px #D4D0C8;"></div>
<div style="left:528px;top:396px;width:13px;height:13px;background:#D4D0C8;border:1px solid;border-color:#808080 #fff #fff #808080;box-shadow:inset 1px 1px #404040,inset -1px -1px #D4D0C8;"></div>
<div style="left:572px;top:396px;width:13px;height:13px;background:#D4D0C8;border:1px solid;border-color:#808080 #fff #fff #808080;box-shadow:inset 1px 1px #404040,inset -1px -1px #D4D0C8;"></div>
<div style="left:622px;top:394px;width:143px;height:19px;background:#fff;border:1px solid;border-color:#808080 #fff #fff #808080;box-shadow:inset 1px 1px #404040,inset -1px -1px #D4D0C8;"></div>
<div style="left:765px;top:394px;width:19px;height:19px;background:#D4D0C8;border:1px solid;border-color:#fff #404040 #404040 #fff;box-shadow:inset -1px -1px #808080;"></div>
<svg style="position:absolute;left:765px;top:394px" width="19" height="19" viewBox="0 0 19 19" shape-rendering="crispEdges"><rect x="3" y="5" width="11" height="6" fill="#ececf6"/><path d="M5 10.5h9.5l1.5 1-3 3H4.5l-1.5-2z" fill="#eaea70"/><rect x="12" y="2" width="1" height="1" fill="#000"/><rect x="16" y="2" width="1" height="1" fill="#000"/><rect x="16" y="4" width="1" height="1" fill="#000"/><rect x="15" y="5" width="1" height="1" fill="#000"/><rect x="13" y="5" width="1" height="1" fill="#000"/><rect x="5" y="5" width="1" height="1" fill="#000"/><rect x="7" y="5" width="1" height="1" fill="#000"/><rect x="9" y="5" width="1" height="1" fill="#000"/><rect x="11" y="5" width="1" height="1" fill="#000"/><rect x="2" y="6" width="1" height="1" fill="#000"/><rect x="2" y="8" width="1" height="1" fill="#000"/><rect x="2" y="10" width="1" height="1" fill="#000"/><rect x="3" y="12" width="1" height="1" fill="#000"/><rect x="4" y="14" width="1" height="1" fill="#000"/><rect x="6" y="14" width="1" height="1" fill="#000"/><rect x="8" y="14" width="1" height="1" fill="#000"/><rect x="10" y="14" width="1" height="1" fill="#000"/><rect x="12" y="14" width="1" height="1" fill="#000"/><rect x="14" y="12" width="1" height="1" fill="#000"/><rect x="15" y="11" width="1" height="1" fill="#000"/><rect x="6" y="10" width="1" height="1" fill="#000"/><rect x="8" y="10" width="1" height="1" fill="#000"/><rect x="10" y="10" width="1" height="1" fill="#000"/><rect x="12" y="10" width="1" height="1" fill="#000"/></svg>
<div style="left:784px;top:394px;width:106px;height:19px;background:#C8C8D0;border:1px solid;border-color:#808080 #fff #fff #808080;box-shadow:inset 1px 1px #404040,inset -1px -1px #D4D0C8;"></div>
<div class="t" style="left:543px;top:393px;font-size:12px;line-height:16px;color:#000;">Техн</div>
<div class="t" style="left:587px;top:393px;font-size:12px;line-height:16px;color:#000;">Ливн</div>
<div style="left:85px;top:413px;width:71px;height:18px;background:#E0DFE3;border:1px solid;border-color:#808080 #fff #fff #808080;box-shadow:inset 1px 1px #404040,inset -1px -1px #D4D0C8;"></div>
<div style="left:156px;top:413px;width:167px;height:18px;background:#fff;border:1px solid;border-color:#808080 #fff #fff #808080;box-shadow:inset 1px 1px #404040,inset -1px -1px #D4D0C8;"></div>
<div style="left:323px;top:413px;width:40px;height:18px;background:#fff;border:1px solid;border-color:#808080 #fff #fff #808080;box-shadow:inset 1px 1px #404040,inset -1px -1px #D4D0C8;"></div>
<div style="left:363px;top:413px;width:20px;height:18px;background:#D4D0C8;border:1px solid;border-color:#fff #404040 #404040 #fff;box-shadow:inset -1px -1px #808080;"></div>
<div class="t" style="left:173.5px;top:416px;width:400px;text-align:center;font-size:11px;line-height:15px;color:#808080;letter-spacing:1px;">...</div>
<div style="left:384px;top:413px;width:75px;height:18px;background:#fff;border:1px solid;border-color:#808080 #fff #fff #808080;box-shadow:inset 1px 1px #404040,inset -1px -1px #D4D0C8;"></div>
<div style="left:460px;top:413px;width:68px;height:18px;background:#E0DFE3;border:1px solid;border-color:#808080 #fff #fff #808080;box-shadow:inset 1px 1px #404040,inset -1px -1px #D4D0C8;"></div>
<div style="left:528px;top:415px;width:13px;height:13px;background:#D4D0C8;border:1px solid;border-color:#808080 #fff #fff #808080;box-shadow:inset 1px 1px #404040,inset -1px -1px #D4D0C8;"></div>
<div style="left:572px;top:415px;width:13px;height:13px;background:#D4D0C8;border:1px solid;border-color:#808080 #fff #fff #808080;box-shadow:inset 1px 1px #404040,inset -1px -1px #D4D0C8;"></div>
<div style="left:622px;top:413px;width:143px;height:18px;background:#fff;border:1px solid;border-color:#808080 #fff #fff #808080;box-shadow:inset 1px 1px #404040,inset -1px -1px #D4D0C8;"></div>
<div style="left:765px;top:413px;width:19px;height:18px;background:#D4D0C8;border:1px solid;border-color:#fff #404040 #404040 #fff;box-shadow:inset -1px -1px #808080;"></div>
<svg style="position:absolute;left:765px;top:413px" width="19" height="19" viewBox="0 0 19 19" shape-rendering="crispEdges"><rect x="3" y="5" width="11" height="6" fill="#ececf6"/><path d="M5 10.5h9.5l1.5 1-3 3H4.5l-1.5-2z" fill="#eaea70"/><rect x="12" y="2" width="1" height="1" fill="#000"/><rect x="16" y="2" width="1" height="1" fill="#000"/><rect x="16" y="4" width="1" height="1" fill="#000"/><rect x="15" y="5" width="1" height="1" fill="#000"/><rect x="13" y="5" width="1" height="1" fill="#000"/><rect x="5" y="5" width="1" height="1" fill="#000"/><rect x="7" y="5" width="1" height="1" fill="#000"/><rect x="9" y="5" width="1" height="1" fill="#000"/><rect x="11" y="5" width="1" height="1" fill="#000"/><rect x="2" y="6" width="1" height="1" fill="#000"/><rect x="2" y="8" width="1" height="1" fill="#000"/><rect x="2" y="10" width="1" height="1" fill="#000"/><rect x="3" y="12" width="1" height="1" fill="#000"/><rect x="4" y="14" width="1" height="1" fill="#000"/><rect x="6" y="14" width="1" height="1" fill="#000"/><rect x="8" y="14" width="1" height="1" fill="#000"/><rect x="10" y="14" width="1" height="1" fill="#000"/><rect x="12" y="14" width="1" height="1" fill="#000"/><rect x="14" y="12" width="1" height="1" fill="#000"/><rect x="15" y="11" width="1" height="1" fill="#000"/><rect x="6" y="10" width="1" height="1" fill="#000"/><rect x="8" y="10" width="1" height="1" fill="#000"/><rect x="10" y="10" width="1" height="1" fill="#000"/><rect x="12" y="10" width="1" height="1" fill="#000"/></svg>
<div style="left:784px;top:413px;width:106px;height:18px;background:#C8C8D0;border:1px solid;border-color:#808080 #fff #fff #808080;box-shadow:inset 1px 1px #404040,inset -1px -1px #D4D0C8;"></div>
<div class="t" style="left:543px;top:412px;font-size:12px;line-height:16px;color:#000;">Техн</div>
<div class="t" style="left:587px;top:412px;font-size:12px;line-height:16px;color:#000;">Ливн</div>
<div style="left:85px;top:431px;width:71px;height:18px;background:#E0DFE3;border:1px solid;border-color:#808080 #fff #fff #808080;box-shadow:inset 1px 1px #404040,inset -1px -1px #D4D0C8;"></div>
<div style="left:156px;top:431px;width:167px;height:18px;background:#fff;border:1px solid;border-color:#808080 #fff #fff #808080;box-shadow:inset 1px 1px #404040,inset -1px -1px #D4D0C8;"></div>
<div style="left:323px;top:431px;width:40px;height:18px;background:#fff;border:1px solid;border-color:#808080 #fff #fff #808080;box-shadow:inset 1px 1px #404040,inset -1px -1px #D4D0C8;"></div>
<div style="left:363px;top:431px;width:20px;height:18px;background:#D4D0C8;border:1px solid;border-color:#fff #404040 #404040 #fff;box-shadow:inset -1px -1px #808080;"></div>
<div class="t" style="left:173.5px;top:434px;width:400px;text-align:center;font-size:11px;line-height:15px;color:#808080;letter-spacing:1px;">...</div>
<div style="left:384px;top:431px;width:75px;height:18px;background:#fff;border:1px solid;border-color:#808080 #fff #fff #808080;box-shadow:inset 1px 1px #404040,inset -1px -1px #D4D0C8;"></div>
<div style="left:460px;top:431px;width:68px;height:18px;background:#E0DFE3;border:1px solid;border-color:#808080 #fff #fff #808080;box-shadow:inset 1px 1px #404040,inset -1px -1px #D4D0C8;"></div>
<div style="left:528px;top:433px;width:13px;height:13px;background:#D4D0C8;border:1px solid;border-color:#808080 #fff #fff #808080;box-shadow:inset 1px 1px #404040,inset -1px -1px #D4D0C8;"></div>
<div style="left:572px;top:433px;width:13px;height:13px;background:#D4D0C8;border:1px solid;border-color:#808080 #fff #fff #808080;box-shadow:inset 1px 1px #404040,inset -1px -1px #D4D0C8;"></div>
<div style="left:622px;top:431px;width:143px;height:18px;background:#fff;border:1px solid;border-color:#808080 #fff #fff #808080;box-shadow:inset 1px 1px #404040,inset -1px -1px #D4D0C8;"></div>
<div style="left:765px;top:431px;width:19px;height:18px;background:#D4D0C8;border:1px solid;border-color:#fff #404040 #404040 #fff;box-shadow:inset -1px -1px #808080;"></div>
<svg style="position:absolute;left:765px;top:431px" width="19" height="19" viewBox="0 0 19 19" shape-rendering="crispEdges"><rect x="3" y="5" width="11" height="6" fill="#ececf6"/><path d="M5 10.5h9.5l1.5 1-3 3H4.5l-1.5-2z" fill="#eaea70"/><rect x="12" y="2" width="1" height="1" fill="#000"/><rect x="16" y="2" width="1" height="1" fill="#000"/><rect x="16" y="4" width="1" height="1" fill="#000"/><rect x="15" y="5" width="1" height="1" fill="#000"/><rect x="13" y="5" width="1" height="1" fill="#000"/><rect x="5" y="5" width="1" height="1" fill="#000"/><rect x="7" y="5" width="1" height="1" fill="#000"/><rect x="9" y="5" width="1" height="1" fill="#000"/><rect x="11" y="5" width="1" height="1" fill="#000"/><rect x="2" y="6" width="1" height="1" fill="#000"/><rect x="2" y="8" width="1" height="1" fill="#000"/><rect x="2" y="10" width="1" height="1" fill="#000"/><rect x="3" y="12" width="1" height="1" fill="#000"/><rect x="4" y="14" width="1" height="1" fill="#000"/><rect x="6" y="14" width="1" height="1" fill="#000"/><rect x="8" y="14" width="1" height="1" fill="#000"/><rect x="10" y="14" width="1" height="1" fill="#000"/><rect x="12" y="14" width="1" height="1" fill="#000"/><rect x="14" y="12" width="1" height="1" fill="#000"/><rect x="15" y="11" width="1" height="1" fill="#000"/><rect x="6" y="10" width="1" height="1" fill="#000"/><rect x="8" y="10" width="1" height="1" fill="#000"/><rect x="10" y="10" width="1" height="1" fill="#000"/><rect x="12" y="10" width="1" height="1" fill="#000"/></svg>
<div style="left:784px;top:431px;width:106px;height:18px;background:#C8C8D0;border:1px solid;border-color:#808080 #fff #fff #808080;box-shadow:inset 1px 1px #404040,inset -1px -1px #D4D0C8;"></div>
<div class="t" style="left:543px;top:430px;font-size:12px;line-height:16px;color:#000;">Техн</div>
<div class="t" style="left:587px;top:430px;font-size:12px;line-height:16px;color:#000;">Ливн</div>
<div class="t" style="left:-158px;top:459px;width:400px;text-align:right;font-size:12px;line-height:16px;color:#000;">Тип водомера</div>
<div style="left:247px;top:456px;width:181px;height:19px;background:#fff;border:1px solid;border-color:#808080 #fff #fff #808080;box-shadow:inset 1px 1px #404040,inset -1px -1px #D4D0C8;"></div>
<div class="t" style="left:250px;top:459px;font-size:12px;line-height:16px;color:#000;">Реально установленный</div>
<div style="left:412px;top:457px;width:16px;height:16px;background:#D4D0C8;border:1px solid;border-color:#fff #404040 #404040 #fff;box-shadow:inset -1px -1px #808080;"></div>
<svg style="position:absolute;left:416px;top:463px" width="7" height="4" viewBox="0 0 7 4"><path d="M0 0h7L3.5 4z" fill="#000"/></svg>
<div style="left:431px;top:455px;width:59px;height:23px;background:#D4D0C8;border:1px solid;border-color:#fff #404040 #404040 #fff;box-shadow:inset -1px -1px #808080;"></div>
<div class="t" style="left:260.5px;top:459px;width:400px;text-align:center;font-size:12px;line-height:16px;color:#000;letter-spacing:0.35px;">Сменить</div>
<div style="left:495px;top:455px;width:107px;height:23px;background:#D4D0C8;border:1px solid;border-color:#fff #404040 #404040 #fff;box-shadow:inset -1px -1px #808080;"></div>
<div class="t" style="left:348.5px;top:459px;width:400px;text-align:center;font-size:12px;line-height:16px;color:#000;letter-spacing:0.35px;">Учетный объем</div>
<div class="t" style="left:410px;top:459px;width:400px;text-align:right;font-size:12px;line-height:16px;color:#000;">Ид. потребителя</div>
<div style="left:815px;top:458px;width:73px;height:17px;background:#C8C8D0;border:1px solid;border-color:#808080 #fff #fff #808080;box-shadow:inset 1px 1px #404040,inset -1px -1px #D4D0C8;"></div>
<div class="t" style="left:485px;top:459px;width:400px;text-align:right;font-size:12px;line-height:16px;color:#000;">77728702</div>
<div class="t" style="left:-169px;top:489px;width:400px;text-align:right;font-size:12px;line-height:16px;color:#000;">Адрес водомера</div>
<div style="left:235px;top:487px;width:523px;height:19px;background:#E0DFE3;border:1px solid;border-color:#808080 #fff #fff #808080;box-shadow:inset 1px 1px #404040,inset -1px -1px #D4D0C8;"></div>
<div style="left:760px;top:487px;width:23px;height:19px;background:#D4D0C8;border:1px solid;border-color:#fff #404040 #404040 #fff;box-shadow:inset -1px -1px #808080;"></div>
<div class="t" style="left:572.0px;top:491px;width:400px;text-align:center;font-size:11px;line-height:15px;color:#000;letter-spacing:1px;">...</div>
<div style="left:118px;top:518px;width:100px;height:24px;background:#D4D0C8;border:1px solid;border-color:#fff #404040 #404040 #fff;box-shadow:inset -1px -1px #808080;"></div>
<div class="t" style="left:-32.0px;top:522px;width:400px;text-align:center;font-size:12px;line-height:16px;color:#000;letter-spacing:0.35px;">Процент канал.</div>
<div style="left:218px;top:518px;width:77px;height:24px;background:#D4D0C8;border:1px solid;border-color:#fff #404040 #404040 #fff;box-shadow:inset -1px -1px #808080;"></div>
<div class="t" style="left:56.5px;top:522px;width:400px;text-align:center;font-size:12px;line-height:16px;color:#000;letter-spacing:0.35px;">Сер. номер</div>
<div style="left:295px;top:518px;width:142px;height:24px;background:#D4D0C8;border:1px solid;border-color:#fff #404040 #404040 #fff;box-shadow:inset -1px -1px #808080;"></div>
<div class="t" style="left:166.0px;top:522px;width:400px;text-align:center;font-size:12px;line-height:16px;color:#000;letter-spacing:0.35px;">Диаметр в т.присоед.</div>
<div style="left:437px;top:518px;width:70px;height:24px;background:#D4D0C8;border:1px solid;border-color:#fff #404040 #404040 #fff;box-shadow:inset -1px -1px #808080;"></div>
<div class="t" style="left:272.0px;top:522px;width:400px;text-align:center;font-size:12px;line-height:16px;color:#000;letter-spacing:0.35px;">Калибр</div>
<div style="left:507px;top:518px;width:140px;height:24px;background:#D4D0C8;border:1px solid;border-color:#fff #404040 #404040 #fff;box-shadow:inset -1px -1px #808080;"></div>
<div class="t" style="left:377.0px;top:522px;width:400px;text-align:center;font-size:12px;line-height:16px;color:#000;letter-spacing:0.35px;">Тип,марка приб.учета</div>
<div style="left:647px;top:518px;width:88px;height:24px;background:#D4D0C8;border:1px solid;border-color:#fff #404040 #404040 #fff;box-shadow:inset -1px -1px #808080;"></div>
<div class="t" style="left:491.0px;top:522px;width:400px;text-align:center;font-size:12px;line-height:16px;color:#000;letter-spacing:0.35px;">Дата поверки</div>
<div style="left:735px;top:518px;width:81px;height:24px;background:#D4D0C8;border:1px solid;border-color:#fff #404040 #404040 #fff;box-shadow:inset -1px -1px #808080;"></div>
<div class="t" style="left:575.5px;top:522px;width:400px;text-align:center;font-size:12px;line-height:16px;color:#000;letter-spacing:0.35px;">Бух.счета</div>
</body></html>
